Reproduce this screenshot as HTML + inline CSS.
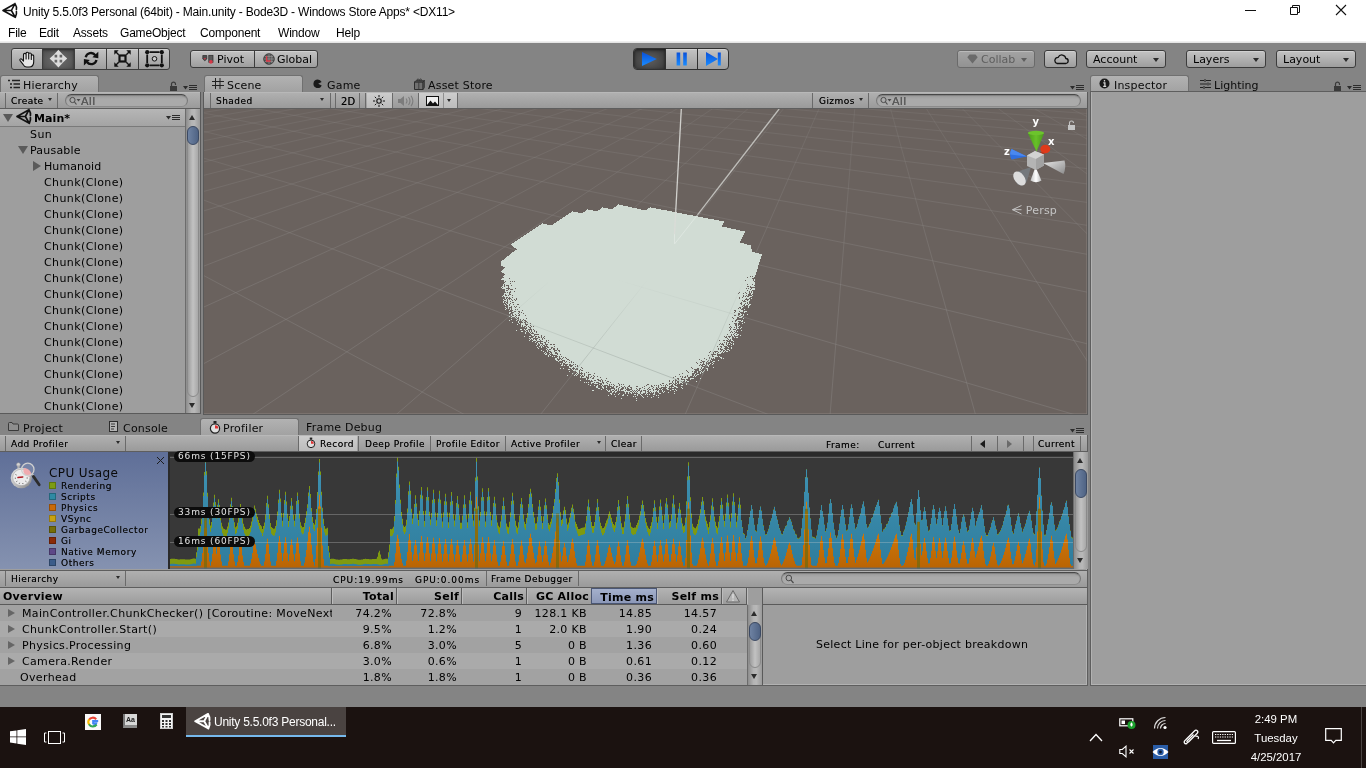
<!DOCTYPE html>
<html lang="en"><head><meta charset="utf-8"><title>Unity 5.5.0f3 Personal</title>
<style>
*{box-sizing:border-box;margin:0;padding:0}
html,body{width:1366px;height:768px;overflow:hidden}
body{background:#848484;font-family:"DejaVu Sans","Liberation Sans",sans-serif;font-size:12px;color:#000;position:relative;line-height:1}
.a{position:absolute}
.t{position:absolute;white-space:nowrap;line-height:16px;height:16px}
.win{font-family:"Liberation Sans",sans-serif}
#titlebar{left:0;top:0;width:1366px;height:43px;background:#fff}
#titlebar:after{content:"";position:absolute;left:0;right:0;bottom:0;height:2px;background:linear-gradient(#f4f4f4,#e0e0e0)}
#title{left:23px;top:4px;font-size:12px;letter-spacing:-0.19px;line-height:16px}
.menu{top:25px;font-size:12px;line-height:16px;letter-spacing:-.2px}
.btn{position:absolute;border:1px solid #3c3c3c;border-radius:3px;background:linear-gradient(#c3c3c3,#9e9e9e);box-shadow:inset 0 1px 0 rgba(255,255,255,.25)}
.tab{position:absolute;height:17px;border:1px solid #707070;border-bottom:none;border-radius:3px 3px 0 0;background:linear-gradient(#b2b2b2,#a2a2a2)}
.tabt{position:absolute;margin-top:1px;font-size:11px;line-height:16px;white-space:nowrap;color:#0a0a0a;letter-spacing:.2px}
.panel{position:absolute;background:#9e9e9e}
.tbar{position:absolute;height:17px;background:linear-gradient(#b0b0b0,#9a9a9a);border-bottom:1px solid #5e5e5e;border-top:1px solid #b8b8b8}
.tb{position:absolute;top:0;margin-top:1px;height:15px;font-size:9px;line-height:15px;white-space:nowrap;letter-spacing:.45px;color:#000;padding:0 0 0 5px;text-shadow:0 0 .4px rgba(0,0,0,.6)}
.sep{position:absolute;top:0;width:1px;height:15px;background:#6a6a6a}
.dd{position:absolute;width:0;height:0;border-left:3px solid transparent;border-right:3px solid transparent;border-top:4px solid #2a2a2a}
.search{position:absolute;height:13px;border:1px solid #787878;border-top-color:#484848;border-bottom-color:#8c8c8c;border-radius:7px;background:linear-gradient(#9c9c9c,#aaaaaa 40%);box-shadow:inset 0 1px 1px rgba(0,0,0,.18)}
.sb{position:absolute;width:15px;background:linear-gradient(90deg,#8c8c8c,#b4b4b4 40%,#b8b8b8 60%,#9a9a9a);border-left:1px solid #6c6c6c}
.thumb{position:absolute;left:1px;width:12px;border:1px solid #3c4a64;border-radius:6px;background:linear-gradient(90deg,#6e82a2,#4f6384)}
.track{position:absolute;left:1px;width:12px;border-radius:6px;background:linear-gradient(90deg,#9c9c9c,#c2c2c2 50%,#a8a8a8);border:1px solid #8a8a8a}
.hr{position:absolute;margin-top:1px;left:0;height:16px;font-size:11px;line-height:16px;white-space:nowrap;letter-spacing:.4px}
.tri-d{position:absolute;width:0;height:0;border-left:5px solid transparent;border-right:5px solid transparent;border-top:8px solid #5a5a5a}
.tri-r{position:absolute;width:0;height:0;border-top:5px solid transparent;border-bottom:5px solid transparent;border-left:8px solid #5a5a5a}
.lg{position:absolute;left:49px;width:7px;height:7px;border:1px solid rgba(0,0,0,.25)}
.lt{position:absolute;left:61px;font-size:9px;line-height:11px;letter-spacing:.55px;white-space:nowrap;color:#0a0a0a;text-shadow:0 0 .4px rgba(0,0,0,.6)}
.row{position:absolute;left:0;width:747px;height:16px}
.cell{position:absolute;top:0;margin-top:1px;height:16px;line-height:16px;font-size:11px;white-space:nowrap;letter-spacing:.35px}
.r{text-align:right}
.th{position:absolute;top:0;height:16px;line-height:18px;font-size:11px;font-weight:bold;white-space:nowrap;letter-spacing:.25px;text-align:right;border-right:1px solid #5c5c5c;box-shadow:1px 0 0 #bcbcbc;padding-right:2px}
.pill{position:absolute;left:174px;height:11px;border-radius:6px;background:#0c0c0c;color:#e4e4e4;font-size:9px;line-height:11px;padding:0 4px;letter-spacing:.85px;white-space:nowrap}
#taskbar{left:0;top:707px;width:1366px;height:61px;background:#1b1210}
.tk{position:absolute;color:#fff;font-family:"Liberation Sans",sans-serif;font-size:11.4px;white-space:nowrap}
#root{position:absolute;left:0;top:0;width:1366px;height:768px;will-change:transform}
</style></head><body><div id="root">
<!-- TITLE + MENU -->
<div id="titlebar" class="a win">
<svg class="a" style="left:0;top:0" width="20" height="22" viewBox="0 0 20 22"><path d="M3 10.500L15 3.700M3 10.500L15.300 17.300M3 10.500H11.400M11.400 10.500L15 3.700M11.400 10.500L15.300 17.300M15 3.700Q17 7 16.400 9.500M16.400 11.500Q17 14 15.300 17.300" stroke="#111" stroke-width="1.600" fill="none" stroke-linejoin="round" stroke-linecap="round"/></svg>
<div id="title" class="t">Unity 5.5.0f3 Personal (64bit) - Main.unity - Bode3D - Windows Store Apps* &lt;DX11&gt;</div>
<svg class="a" style="left:1240px;top:0" width="126" height="22" viewBox="0 0 126 22"><path d="M5 10.5h11" stroke="#111" stroke-width="1"/><path d="M50.5 7.5h7v7h-7z M52.5 7.5v-2h7v7h-2" stroke="#111" stroke-width="1" fill="none"/><path d="M96 5l10 10M106 5l-10 10" stroke="#111" stroke-width="1.1"/></svg>
<div class="t menu" style="left:8px">File</div>
<div class="t menu" style="left:39px">Edit</div>
<div class="t menu" style="left:73px">Assets</div>
<div class="t menu" style="left:120px">GameObject</div>
<div class="t menu" style="left:200px">Component</div>
<div class="t menu" style="left:278px">Window</div>
<div class="t menu" style="left:336px">Help</div>
</div>
<!-- MAIN TOOLBAR -->
<div class="btn" style="left:11px;top:48px;width:159px;height:22px;overflow:hidden">
 <div class="a" style="left:30px;top:0;width:32px;height:20px;background:radial-gradient(ellipse at 50% 55%,#6e6e6e,#545454 75%);box-shadow:inset 0 1px 3px rgba(0,0,0,.55)"></div>
 <div class="a" style="left:30px;top:0;width:1px;height:20px;background:#3c3c3c"></div>
 <div class="a" style="left:62px;top:0;width:1px;height:20px;background:#3c3c3c"></div>
 <div class="a" style="left:94px;top:0;width:1px;height:20px;background:#3c3c3c"></div>
 <div class="a" style="left:126px;top:0;width:1px;height:20px;background:#3c3c3c"></div>
 <svg class="a" style="left:0;top:0" width="158" height="20" viewBox="0 0 158 20">
  <g transform="translate(6.500,1.500)"><path d="M1.600 10.200c-1-1.300.7-2.600 1.800-1.400L5 10.600V4c0-1.500 2.600-1.500 2.600 0V8.500V2.800c0-1.500 2.600-1.500 2.600 0V8.500V3.600c0-1.500 2.600-1.500 2.600 0V9V5.400c0-1.400 2.400-1.400 2.400 0V11.500c0 3-1.800 5-4.600 5H8.200c-1.800 0-2.800-1-3.800-2.800Z" fill="#e6e6e6" stroke="#111" stroke-width="1.100" stroke-linejoin="round"/></g>
  <path d="M46.400.8L51 5.800H47.600V8.400H50.200V5L55.200 9.600L50.200 14.200V10.800H47.600V13.400H51L46.400 18.400L41.800 13.400H45.200V10.800H42.600V14.200L37.600 9.600L42.600 5V8.400H45.200V5.800H41.800Z" fill="#dcdcdc"/>
  <path d="M73.700 8.300A5.400 5.400 0 0 1 83.300 6.200" stroke="#111" stroke-width="2.300" fill="none"/><path d="M86.300 2.800V9.200L80.400 8.200Z" fill="#111"/>
  <path d="M84.500 10.900A5.400 5.400 0 0 1 74.900 13" stroke="#111" stroke-width="2.300" fill="none"/><path d="M71.900 16.400V10L77.800 11Z" fill="#111"/>
  <rect x="107.500" y="6.500" width="6" height="6" fill="none" stroke="#111" stroke-width="2.200"/>
  <path d="M103.500 2.500l3.200 3.200M117.500 2.500l-3.200 3.200M103.500 16.500l3.200-3.200M117.500 16.500l-3.200-3.200" stroke="#111" stroke-width="1.400"/>
  <path d="M102.300 1.300h4.400l-4.400 4.400zM118.700 1.300h-4.400l4.400 4.400zM102.300 17.700h4.400l-4.400-4.400zM118.700 17.700h-4.400l4.400-4.400z" fill="#111"/>
  <path d="M137.500 3.200h10M137.500 16.300h10M135.200 5.500v8.500M149.800 5.500v8.500" stroke="#111" stroke-width="1.800"/>
  <circle cx="135.200" cy="3.200" r="2.100" fill="#111"/><circle cx="149.800" cy="3.200" r="2.100" fill="#111"/><circle cx="135.200" cy="16.300" r="2.100" fill="#111"/><circle cx="149.800" cy="16.300" r="2.100" fill="#111"/>
  <circle cx="142.500" cy="9.800" r="2.300" fill="#c8c8c8" stroke="#111" stroke-width="1"/>
 </svg>
</div>
<div class="btn" style="left:190px;top:50px;width:128px;height:18px">
 <div class="a" style="left:63px;top:0;width:1px;height:16px;background:#3c3c3c"></div>
 <svg class="a" style="left:11px;top:3px" width="12" height="11" viewBox="0 0 12 11"><path d="M.8 1.500h4v3.500l-2 1.800l-2-1.800z" fill="#4e4e4e" stroke="#2a2a2a" stroke-width=".7"/><path d="M1.300 4.200h3l-1.500 1.600z" fill="#d83848"/><rect x="6.800" y="1.300" width="4.200" height="7" fill="#5a5a5a" stroke="#2a2a2a" stroke-width=".7"/><circle cx="8.900" cy="7.800" r="1.900" fill="#d83848"/></svg>
 <div class="t" style="left:26px;top:1px;font-size:11px;letter-spacing:0">Pivot</div>
 <svg class="a" style="left:72px;top:2px" width="12" height="12" viewBox="0 0 12 12"><circle cx="6" cy="6" r="5.300" fill="#585858" stroke="#2e2e2e" stroke-width=".8"/><path d="M6 1v10M8.800 1.800v8.400M1 6h10M1.800 3.500h8.400M1.800 8.500h8.400" stroke="#9a9a9a" stroke-width=".6"/><path d="M3.600 3.300v4.700h4" stroke="#e03848" stroke-width="1.300" fill="none"/></svg>
 <div class="t" style="left:86px;top:1px;font-size:11px;letter-spacing:0">Global</div>
</div>
<!-- play controls -->
<div class="btn" style="left:633px;top:48px;width:96px;height:22px;overflow:hidden;border-color:#303030;border-radius:4px">
 <div class="a" style="left:0;top:0;width:31px;height:20px;background:radial-gradient(ellipse at 50% 55%,#5e5e5e,#3e3e3e 80%);box-shadow:inset 0 1px 3px rgba(0,0,0,.6)"></div>
 <div class="a" style="left:31px;top:0;width:1px;height:20px;background:#303030"></div>
 <div class="a" style="left:63px;top:0;width:1px;height:20px;background:#303030"></div>
 <svg class="a" style="left:0;top:0" width="94" height="20" viewBox="0 0 94 20"><defs><linearGradient id="pb" x1="0" y1="0" x2="0" y2="1"><stop offset="0" stop-color="#0a50d8"/><stop offset="1" stop-color="#1a8cff"/></linearGradient></defs>
  <path d="M8 3v14l14.800-7z" fill="url(#pb)"/>
  <rect x="42.600" y="3.500" width="3.600" height="13" fill="url(#pb)"/><rect x="49.200" y="3.500" width="3.600" height="13" fill="url(#pb)"/>
  <path d="M72 3v14l12-7z" fill="url(#pb)"/><rect x="83.800" y="3.500" width="3" height="13" fill="url(#pb)"/>
 </svg>
</div>
<!-- right toolbar -->
<div class="btn" style="left:957px;top:50px;width:78px;height:18px;border-color:#6a6a6a;background:linear-gradient(#a4a4a4,#929292)">
 <svg class="a" style="left:9px;top:3px" width="11" height="10" viewBox="0 0 11 10"><path d="M2.500 .5h6l2.200 2.800L5.500 9.500.3 3.300z" fill="#6a6a6a"/></svg>
 <div class="t" style="left:23px;top:1px;font-size:11px;letter-spacing:0;color:#5e5e5e">Collab</div>
 <div class="dd" style="left:63px;top:7px;border-top-color:#5e5e5e"></div>
</div>
<div class="btn" style="left:1044px;top:50px;width:33px;height:18px">
 <svg class="a" style="left:8px;top:3px" width="16" height="11" viewBox="0 0 16 11"><path d="M4 9.500h8.500a2.500 2.500 0 0 0 .3-5A4 4 0 0 0 5.200 3.300 3.200 3.200 0 0 0 4 9.500z" fill="none" stroke="#111" stroke-width="1.300"/></svg>
</div>
<div class="btn" style="left:1086px;top:50px;width:80px;height:18px"><div class="t" style="left:6px;top:1px;font-size:11px;letter-spacing:0">Account</div><div class="dd" style="left:66px;top:7px"></div></div>
<div class="btn" style="left:1186px;top:50px;width:80px;height:18px"><div class="t" style="left:6px;top:1px;font-size:11px;letter-spacing:0">Layers</div><div class="dd" style="left:66px;top:7px"></div></div>
<div class="btn" style="left:1276px;top:50px;width:80px;height:18px"><div class="t" style="left:6px;top:1px;font-size:11px;letter-spacing:0">Layout</div><div class="dd" style="left:66px;top:7px"></div></div>
<!-- HIERARCHY -->
<div class="tab" style="left:0;top:75px;width:99px"></div>
<svg class="a" style="left:8px;top:79px" width="12" height="10" viewBox="0 0 12 10"><path d="M0 1.500h2M4 1.500h8M2 5h2M5.500 5H12M2 8.500h2M5.500 8.500H12" stroke="#222" stroke-width="1.300"/></svg>
<div class="tabt" style="left:23px;top:77px">Hierarchy</div>
<svg class="a" style="left:169px;top:80.700px" width="10" height="11" viewBox="0 0 10 11"><rect x="1" y="5" width="7" height="5" fill="#3a3a3a"/><path d="M2.500 5V3.200a2 2 0 0 1 4 0V4" stroke="#3a3a3a" stroke-width="1.200" fill="none"/></svg>
<svg class="a" style="left:183px;top:85px" width="15" height="7" viewBox="0 0 15 7"><path d="M0 1h5L2.500 4.500z" fill="#2c2c2c"/><path d="M6 .5h8M6 2.500h8M6 4.500h8" stroke="#2c2c2c" stroke-width="1"/></svg>
<div class="panel" style="left:0;top:92px;width:200px;height:322px"></div>
<div class="tbar" style="left:0;top:92px;width:200px">
 <div class="sep" style="left:5px"></div>
 <div class="tb" style="left:6px">Create</div><div class="dd" style="left:48px;top:5px;border-left-width:2.500px;border-right-width:2.500px;border-top-width:3px"></div>
 <div class="sep" style="left:57px"></div>
 <div class="search" style="left:65px;top:1px;width:123px"></div>
 <svg class="a" style="left:69px;top:3px" width="12" height="10" viewBox="0 0 12 10"><circle cx="3.500" cy="4" r="2.600" fill="none" stroke="#4a4a4a" stroke-width="1"/><path d="M5.500 6l2 2.500" stroke="#4a4a4a" stroke-width="1.200"/><path d="M7.500 3h4l-2 2.500z" fill="#4a4a4a"/></svg>
 <div class="tb" style="left:76px;color:#5c5c5c;font-size:11px;letter-spacing:.3px">All</div>
</div>
<div class="a" style="left:0;top:109px;width:185px;height:18px;background:linear-gradient(#b6b6b6,#a4a4a4);border-bottom:1px solid #7a7a7a"></div>
<div class="tri-d" style="left:3px;top:114px"></div>
<svg class="a" style="left:14px;top:106px" width="20" height="22" viewBox="0 0 20 22"><path d="M3 10.500L15 3.700M3 10.500L15.300 17.300M3 10.500H11.400M11.400 10.500L15 3.700M11.400 10.500L15.300 17.300M15 3.700Q17 7 16.400 9.500M16.400 11.500Q17 14 15.300 17.300" stroke="#111" stroke-width="1.700" fill="none" stroke-linejoin="round" stroke-linecap="round"/></svg>
<div class="hr" style="left:34px;top:110px;font-weight:bold;letter-spacing:.1px">Main*</div>
<svg class="a" style="left:166px;top:115px" width="15" height="7" viewBox="0 0 15 7"><path d="M0 1h5L2.500 4.500z" fill="#2c2c2c"/><path d="M6 .5h8M6 2.500h8M6 4.500h8" stroke="#2c2c2c" stroke-width="1"/></svg>
<div class="hr" style="left:30px;top:126px">Sun</div>
<div class="tri-d" style="left:18px;top:146px"></div><div class="hr" style="left:30px;top:142px;letter-spacing:.2px">Pausable</div>
<div class="tri-r" style="left:33px;top:161px"></div><div class="hr" style="left:44px;top:158px;letter-spacing:.1px">Humanoid</div>
<div class="hr" style="left:44px;top:174px">Chunk(Clone)</div>
<div class="hr" style="left:44px;top:190px">Chunk(Clone)</div>
<div class="hr" style="left:44px;top:206px">Chunk(Clone)</div>
<div class="hr" style="left:44px;top:222px">Chunk(Clone)</div>
<div class="hr" style="left:44px;top:238px">Chunk(Clone)</div>
<div class="hr" style="left:44px;top:254px">Chunk(Clone)</div>
<div class="hr" style="left:44px;top:270px">Chunk(Clone)</div>
<div class="hr" style="left:44px;top:286px">Chunk(Clone)</div>
<div class="hr" style="left:44px;top:302px">Chunk(Clone)</div>
<div class="hr" style="left:44px;top:318px">Chunk(Clone)</div>
<div class="hr" style="left:44px;top:334px">Chunk(Clone)</div>
<div class="hr" style="left:44px;top:350px">Chunk(Clone)</div>
<div class="hr" style="left:44px;top:366px">Chunk(Clone)</div>
<div class="hr" style="left:44px;top:382px">Chunk(Clone)</div>
<div class="hr" style="left:44px;top:398px">Chunk(Clone)</div>
<div class="sb" style="left:185px;top:109px;height:305px">
 <div class="track" style="top:17px;height:271px"></div>
 <div class="thumb" style="top:17px;height:19px"></div>
 <div class="a" style="left:3px;top:6px;width:0;height:0;border-left:3.500px solid transparent;border-right:3.500px solid transparent;border-bottom:5px solid #2c2c2c"></div>
 <div class="a" style="left:3px;top:294px;width:0;height:0;border-left:3.500px solid transparent;border-right:3.500px solid transparent;border-top:5px solid #2c2c2c"></div>
</div>
<div class="a" style="left:200px;top:92px;width:1px;height:322px;background:#5a5a5a"></div>
<div class="a" style="left:0;top:413px;width:201px;height:1px;background:#5a5a5a"></div>
<!-- SCENE -->
<div class="tab" style="left:204px;top:75px;width:99px"></div>
<svg class="a" style="left:212px;top:78px" width="12" height="11" viewBox="0 0 12 11"><path d="M3.500 0v11M8 0v11M0 3.500h12M0 7.500h12" stroke="#222" stroke-width="1"/></svg>
<div class="tabt" style="left:227px;top:77px">Scene</div>
<svg class="a" style="left:313px;top:78.500px" width="9.500" height="9.500" viewBox="0 0 11 11"><path d="M5.500 .5a5 5 0 1 0 4.600 7L6 5.500l4-2A5 5 0 0 0 5.500 .5z" fill="#1a1a1a"/></svg>
<div class="tabt" style="left:327px;top:77px">Game</div>
<svg class="a" style="left:413px;top:78px" width="12" height="12" viewBox="0 0 12 12"><path d="M1.500 4h8.500v7.500h-8.500z" fill="#707070" stroke="#2e2e2e" stroke-width="1"/><path d="M1.500 4l1.500-1.500h8.500l-1.500 1.500zM10 4l1.500-1.500v7l-1.500 2z" fill="#4a4a4a" stroke="#2e2e2e" stroke-width=".6"/><path d="M4.500 2.500C3.500 .5 6 .3 6.300 2.500 6.800 .3 9.300 .8 8 2.500" fill="none" stroke="#2e2e2e" stroke-width=".9"/><path d="M5.800 4v7.500" stroke="#3a3a3a" stroke-width=".9"/></svg>
<div class="tabt" style="left:428px;top:77px">Asset Store</div>
<svg class="a" style="left:1070px;top:85px" width="15" height="7" viewBox="0 0 15 7"><path d="M0 1h5L2.500 4.500z" fill="#2c2c2c"/><path d="M6 .5h8M6 2.500h8M6 4.500h8" stroke="#2c2c2c" stroke-width="1"/></svg>
<div class="a" style="left:203px;top:92px;width:885px;height:323px;background:#8a827e;border:1px solid #5a5a5a;border-top:none"></div>
<div class="tbar" style="left:204px;top:92px;width:2px"></div>
<div class="tbar" style="left:205px;top:92px;width:882px">
 <div class="sep" style="left:5px"></div>
 <div class="tb" style="left:6px">Shaded</div><div class="dd" style="left:115px;top:5px;border-left-width:2.500px;border-right-width:2.500px;border-top-width:3px"></div>
 <div class="sep" style="left:125px"></div><div class="sep" style="left:130px"></div>
 <div class="tb" style="left:131px;font-size:10px;letter-spacing:.2px">2D</div>
 <div class="sep" style="left:154px"></div><div class="sep" style="left:160px"></div>
 <div class="a" style="left:162px;top:0;width:25px;height:15px;background:linear-gradient(#cdcdcd,#bcbcbc)"></div>
 <svg class="a" style="left:167px;top:1px" width="14" height="14" viewBox="0 0 14 14"><circle cx="7" cy="7" r="2.200" fill="none" stroke="#111" stroke-width="1.100"/><path d="M7 1v2.200M7 10.800V13M1 7h2.200M10.800 7H13M2.800 2.800l1.500 1.500M9.700 9.700l1.500 1.500M2.800 11.200l1.500-1.500M9.700 4.300l1.500-1.500" stroke="#111" stroke-width="1"/></svg>
 <div class="sep" style="left:187px"></div>
 <svg class="a" style="left:192px;top:2px" width="18" height="12" viewBox="0 0 18 12"><path d="M1 4h2.500L7 1v10L3.500 8H1z" fill="#7c7c7c"/><path d="M9 3.500q2 2.500 0 5M11.500 2q3 4 0 8M14 .8q3.800 5.200 0 10.400" stroke="#7c7c7c" fill="none" stroke-width="1.100"/></svg>
 <div class="sep" style="left:213px"></div>
 <div class="a" style="left:214px;top:0;width:38px;height:15px;background:linear-gradient(#cdcdcd,#bcbcbc)"></div>
 <svg class="a" style="left:221px;top:3px" width="13" height="10" viewBox="0 0 13 10"><rect x=".5" y=".5" width="12" height="9" fill="#f0f0f0" stroke="#111"/><path d="M1 9l3.500-4.500 2.500 3 2-2L12 9z" fill="#111"/></svg>
 <div class="sep" style="left:238px;background:#909090"></div>
 <div class="dd" style="left:242px;top:6px;border-left-width:2.500px;border-right-width:2.500px;border-top-width:3px"></div>
 <div class="sep" style="left:252px"></div>
 <div class="sep" style="left:607px"></div>
 <div class="tb" style="left:609px">Gizmos</div><div class="dd" style="left:654px;top:5px;border-left-width:2.500px;border-right-width:2.500px;border-top-width:3px"></div>
 <div class="sep" style="left:663px"></div>
 <div class="search" style="left:671px;top:1px;width:205px"></div>
 <svg class="a" style="left:675px;top:3px" width="12" height="10" viewBox="0 0 12 10"><circle cx="3.500" cy="4" r="2.600" fill="none" stroke="#4a4a4a" stroke-width="1"/><path d="M5.500 6l2 2.500" stroke="#4a4a4a" stroke-width="1.200"/><path d="M7.500 3h4l-2 2.500z" fill="#4a4a4a"/></svg>
 <div class="tb" style="left:682px;color:#5c5c5c;font-size:11px;letter-spacing:.3px">All</div>
</div>
<svg class="a" style="left:204px;top:109px" width="882.500" height="304.500" viewBox="0 0 882.500 304.500">
<rect width="882.500" height="304.500" fill="#6a625e"/>
<defs><linearGradient id="gf" x1="0" y1="0" x2="0" y2="1"><stop offset="0" stop-color="#8a8684" stop-opacity=".16"/><stop offset=".35" stop-color="#8a8684" stop-opacity=".42"/><stop offset="1" stop-color="#8a8684" stop-opacity=".5"/></linearGradient></defs>
<path d="M-292.9 437.7L-211.1 656.4M-299 76.4L384.8 685.5M-298.6 7.5L941.2 668.5M-299.6 -22.6L1269.9 573.4M-294.8 -37.6L1278.2 425.7M-259.8 -39.9L1283.6 331M-227.3 -42L1287.3 265.1M-197 -44L1290 216.6M-168.7 -45.8L1292.2 179.4M-142.3 -47.6L1293.8 149.9M-117.4 -49.2L1295.2 126M-94.1 -50.7L1296.3 106.3M-72.1 -52.2L1297.2 89.7M-51.4 -53.5L1298 75.5M-31.8 -54.8L1298.7 63.3M-13.2 -56L1299.3 52.7M4.3 -57.2L1299.8 43.3M21 -58.3L1281.3 33.6M36.9 -59.3L1282.8 26.4M51.9 -60.3L1284 19.8M66.3 -61.2L1285.2 13.9M80 -62.1L1286.3 8.6M93.1 -63L1287.2 3.7M105.6 -63.8L1288.1 -0.8M117.5 -64.6L1288.9 -4.9M129 -65.4L1289.6 -8.7M140 -66.1L1290.3 -12.2M150.5 -66.8L1291 -15.4M160.6 -67.4L1291.6 -18.5M170.3 -68.1L1292.1 -21.3M179.7 -68.7L1292.6 -23.9M188.7 -69.3L1293.1 -26.4M197.4 -69.8L1293.6 -28.7M205.7 -70.4L1294 -30.9M213.8 -70.9L1294.4 -33M221.5 -71.4L1294.8 -34.9M229 -71.9L1295.2 -36.8M236.3 -72.4L1295.5 -38.5M243.3 -72.9L1295.8 -40.2M250.1 -73.3L1296.1 -41.7M256.7 -73.7L1296.4 -43.2M263 -74.1L1296.7 -44.6M269.2 -74.5L1297 -46M275.1 -74.9L1297.2 -47.3M280.9 -75.3L1297.5 -48.5M286.6 -75.7L1297.7 -49.7M292 -76L1297.9 -50.8M297.3 -76.4L1298.1 -51.9M302.4 -76.7L1298.3 -53M307.4 -77.1L1298.5 -54M312.3 -77.4L1298.7 -54.9M317 -77.7L1298.9 -55.8M321.6 -78L1299.1 -56.7M326.1 -78.3L1299.3 -57.6M330.5 -78.6L1299.4 -58.4M334.7 -78.8L1299.6 -59.2M338.9 -79.1L1299.7 -60M342.9 -79.4L1299.9 -60.7M346.8 -79.6L1294.3 -61.5M350.7 -79.9L1294.5 -62.2M354.4 -80.1L1294.7 -62.9M358.1 -80.4L1295 -63.5M-294.8 -37.6L361.7 -80.6M-291.1 -36.5L366.6 -80.5M-296.8 -34.7L371.5 -80.4M-292.9 -33.5L376.5 -80.3M-298.9 -31.6L381.6 -80.3M-294.9 -30.2L386.7 -80.2M-290.8 -28.9L391.9 -80.1M-297.1 -26.6L397.2 -80M-292.8 -25.1L402.5 -79.9M-299.6 -22.6L407.9 -79.8M-295 -20.8L413.3 -79.7M-290.3 -19L418.9 -79.6M-297.6 -16.1L424.4 -79.5M-292.6 -14L430.1 -79.4M-287.3 -11.9L435.8 -79.3M-295.2 -8.3L441.6 -79.2M-289.7 -5.8L447.5 -79.1M-298.2 -1.8L453.4 -79M-292.3 1.1L459.4 -78.9M-286.1 4.1L465.5 -78.8M-295.4 9.2L471.7 -78.7M-288.8 12.8L477.9 -78.6M-299.1 18.7L484.3 -78.4M-291.9 23L490.7 -78.3M-284.2 27.6L497.2 -78.2M-295.8 35.4L503.8 -78.1M-287.4 41L510.5 -78M-278.2 47.1L517.2 -77.9M-291.3 57.6L524.1 -77.7M-281.2 65.3L531 -77.6M-296.4 78.7L538.1 -77.5M-285.1 88.8L545.2 -77.4M-272.4 100.1L552.5 -77.2M-290.2 120.3L559.8 -77.1M-275.6 135.9L567.3 -77M-297.5 164.7L574.8 -76.8M-280.3 187.7L582.5 -76.7M-259.7 215.2L590.3 -76.6M-287.6 269.3L598.2 -76.4M-261.3 316.2L606.2 -76.3M-227.3 376.8L614.3 -76.1M-264.5 513.6L622.5 -76M-211.1 656.4L630.9 -75.9M64.1 648.4L639.4 -75.7M334.4 640.6L648 -75.6M599.7 632.9L656.8 -75.4M860.3 625.3L665.7 -75.2M1116.2 617.9L674.7 -75.1M1294.3 537L683.9 -74.9M1266.9 347.4L693.2 -74.8M1287.3 265.1L702.7 -74.6M1270.6 193.4L712.3 -74.4M1284.5 155.4L722.1 -74.2M1295.2 126L732 -74.1M1283 96.2L742.1 -73.9M1291.5 78.3L752.4 -73.7M1298.7 63.3L762.8 -73.5M1289.2 47L773.4 -73.3M1295.4 36.6L784.2 -73.1M1287.5 25L795.2 -73M1292.9 17.3L806.4 -72.8M1297.7 10.6L817.8 -72.6M1291.1 2.7L829.3 -72.3M1295.4 -2.5L841.1 -72.1M1299.4 -7.3L853.1 -71.9M1293.6 -12.9L865.3 -71.7M1297.2 -16.7L877.8 -71.5M1292.1 -21.3L890.4 -71.3M1295.5 -24.5L903.3 -71M1298.6 -27.4L916.5 -70.8M1294 -30.9L929.9 -70.6M1296.9 -33.4L943.5 -70.3M1299.6 -35.7L957.4 -70.1M1295.5 -38.5L971.6 -69.8M1298.1 -40.5L986.1 -69.6M1294.3 -42.9L1000.8 -69.3M1296.7 -44.6L1015.9 -69.1M1299 -46.3L1031.2 -68.8M1295.5 -48.3L1046.9 -68.5M1297.7 -49.7L1062.9 -68.2M1299.8 -51.1L1079.2 -67.9M1296.6 -52.7L1095.9 -67.6M1298.5 -54L1113 -67.3M1295.5 -55.5L1130.4 -67M1297.4 -56.5L1148.2 -66.7M1299.3 -57.6L1166.4 -66.4M1296.5 -58.9L1185 -66.1M1298.2 -59.8L1204 -65.7M1299.9 -60.7L1223.4 -65.4M1297.2 -61.8L1243.3 -65M1298.9 -62.6L1263.7 -64.7M1296.4 -63.6L1284.6 -64.3" stroke="url(#gf)" stroke-width="1" fill="none"/>
<path d="M414 95h1M413 96h6M412 97h12M398 98h1M410 98h18M446 98h1M397 99h7M409 99h24M444 99h8M383 100h1M396 100h41M443 100h14M382 101h7M394 101h69M368 102h1M381 102h87M367 103h7M379 103h94M365 104h113M364 105h119M362 106h127M361 107h133M359 108h140M358 109h146M356 110h154M355 111h160M353 112h167M352 113h168M338 114h1M350 114h169M337 115h6M349 115h170M335 116h183M334 117h184M332 118h191M331 119h196M329 120h203M328 121h208M326 122h215M325 123h216M323 124h217M322 125h218M320 126h219M319 127h220M317 128h221M316 129h222M314 130h223M313 131h224M311 132h225M310 133h226M308 134h232M307 135h236M308 136h239M309 137h238M310 138h237M312 139h235M313 140h235M311 141h237M310 142h238M308 143h243M307 144h248M306 145h252M305 146h253M303 147h254M302 148h255M301 149h256M300 150h256M298 151h258M297 152h259M297 153h258M297 154h258M297 155h258M297 156h257M299 157h255M301 158h253M300 159h254M299 160h254M298 161h255M297 162h256M298 163h254M300 164h252M301 165h251M300 166h251M299 167h247M547 167h1M549 167h2M300 168h243M544 168h6M298 169h7M306 169h242M297 170h252M550 170h1M300 171h241M542 171h7M550 171h1M300 172h1M302 172h4M307 172h1M309 172h1M311 172h239M301 173h250M300 174h6M307 174h244M299 175h1M301 175h242M544 175h4M549 175h2M299 176h1M301 176h1M305 176h2M308 176h242M298 177h2M301 177h3M305 177h238M545 177h1M547 177h4M297 178h1M299 178h5M305 178h241M298 179h4M306 179h5M312 179h230M543 179h1M545 179h2M548 179h3M301 180h3M305 180h1M309 180h237M547 180h4M301 181h1M304 181h239M544 181h4M301 182h5M307 182h3M311 182h234M546 182h1M548 182h1M302 183h1M304 183h1M307 183h228M536 183h5M542 183h3M546 183h1M548 183h1M300 184h5M306 184h228M535 184h4M540 184h2M543 184h2M547 184h2M300 185h1M302 185h3M307 185h237M547 185h1M299 186h2M303 186h1M305 186h3M309 186h230M540 186h2M543 186h1M548 186h1M298 187h1M300 187h239M540 187h1M542 187h1M545 187h3M301 188h1M304 188h1M306 188h2M309 188h226M536 188h2M539 188h7M301 189h1M303 189h1M307 189h5M313 189h222M536 189h6M543 189h2M547 189h1M299 190h1M302 190h1M304 190h1M306 190h1M308 190h2M311 190h1M313 190h228M545 190h1M300 191h3M304 191h4M309 191h2M312 191h226M539 191h1M541 191h2M544 191h2M299 192h1M302 192h1M304 192h2M307 192h232M542 192h3M299 193h1M301 193h1M304 193h4M310 193h227M538 193h5M544 193h1M302 194h1M304 194h2M307 194h229M538 194h3M542 194h1M544 194h1M300 195h1M303 195h2M306 195h3M310 195h3M315 195h222M538 195h2M541 195h3M545 195h2M301 196h1M304 196h1M306 196h233M541 196h1M544 196h2M304 197h3M308 197h2M311 197h1M313 197h225M539 197h1M544 197h1M301 198h1M304 198h1M308 198h3M312 198h3M316 198h219M537 198h2M544 198h1M302 199h1M304 199h1M306 199h1M308 199h226M535 199h1M537 199h1M301 200h1M306 200h1M308 200h3M312 200h1M314 200h223M540 200h1M305 201h1M309 201h9M319 201h211M532 201h7M308 202h2M312 202h2M316 202h215M532 202h3M536 202h3M540 202h3M305 203h2M310 203h5M316 203h1M318 203h212M531 203h5M540 203h1M305 204h1M309 204h5M315 204h4M320 204h214M536 204h1M307 205h1M309 205h2M312 205h3M316 205h218M536 205h2M539 205h1M543 205h1M307 206h1M310 206h2M313 206h1M316 206h5M322 206h208M532 206h2M535 206h2M539 206h1M305 207h1M308 207h3M312 207h223M537 207h2M307 208h1M311 208h1M313 208h1M315 208h213M529 208h4M535 208h3M312 209h1M315 209h7M323 209h206M530 209h3M539 209h1M307 210h1M313 210h1M315 210h1M317 210h2M320 210h212M305 211h1M312 211h1M315 211h1M317 211h1M319 211h1M322 211h209M533 211h4M538 211h1M314 212h1M318 212h3M323 212h205M529 212h2M532 212h2M537 212h2M308 213h1M314 213h1M319 213h1M322 213h1M324 213h211M540 213h1M315 214h1M317 214h4M322 214h4M327 214h203M533 214h1M538 214h1M313 215h1M317 215h4M324 215h201M526 215h5M533 215h1M317 216h1M319 216h3M323 216h3M327 216h204M533 216h1M535 216h1M317 217h1M319 217h1M322 217h2M325 217h2M328 217h1M330 217h196M527 217h5M533 217h2M321 218h1M323 218h2M327 218h198M526 218h1M528 218h2M531 218h1M533 218h1M537 218h1M323 219h3M327 219h199M527 219h5M533 219h2M536 219h1M316 220h2M320 220h1M322 220h2M328 220h1M330 220h196M527 220h2M532 220h1M312 221h1M321 221h1M324 221h1M326 221h1M328 221h2M331 221h194M526 221h6M537 221h1M317 222h2M322 222h1M324 222h1M326 222h1M328 222h2M331 222h1M333 222h194M528 222h2M531 222h1M533 222h1M321 223h1M325 223h1M327 223h1M329 223h3M333 223h193M527 223h1M529 223h2M321 224h1M326 224h1M330 224h200M531 224h2M327 225h3M335 225h188M524 225h3M528 225h1M530 225h2M533 225h2M328 226h2M331 226h6M338 226h189M528 226h2M531 226h3M536 226h1M320 227h1M325 227h2M330 227h1M333 227h1M335 227h2M338 227h2M341 227h179M521 227h1M523 227h1M527 227h1M529 227h1M329 228h2M332 228h2M336 228h1M338 228h1M340 228h181M523 228h2M526 228h2M530 228h1M532 228h2M325 229h1M327 229h2M334 229h4M339 229h1M341 229h182M524 229h4M326 230h1M328 230h1M330 230h1M333 230h2M336 230h2M339 230h185M525 230h1M527 230h1M325 231h1M329 231h3M333 231h3M337 231h5M343 231h1M345 231h170M516 231h3M521 231h1M524 231h1M527 231h2M328 232h1M332 232h1M339 232h3M343 232h180M529 232h1M331 233h1M334 233h2M337 233h3M342 233h2M345 233h175M521 233h1M523 233h2M526 233h1M333 234h1M335 234h1M339 234h2M342 234h174M517 234h1M519 234h3M523 234h1M527 234h1M529 234h1M333 235h1M336 235h2M339 235h2M344 235h2M348 235h1M351 235h164M516 235h1M520 235h2M523 235h1M525 235h1M529 235h1M332 236h1M336 236h1M338 236h1M341 236h1M343 236h176M520 236h3M527 236h1M335 237h1M337 237h1M339 237h1M344 237h6M351 237h162M514 237h2M518 237h2M523 237h1M333 238h1M337 238h1M342 238h1M345 238h2M349 238h168M518 238h3M524 238h1M527 238h1M334 239h1M343 239h4M348 239h1M351 239h2M354 239h160M515 239h1M517 239h3M527 239h1M342 240h1M344 240h1M347 240h2M351 240h2M354 240h160M515 240h1M519 240h2M523 240h2M337 241h1M343 241h1M345 241h5M353 241h1M356 241h161M518 241h1M521 241h1M525 241h1M339 242h1M343 242h1M347 242h3M351 242h4M356 242h150M507 242h3M514 242h2M517 242h2M520 242h1M522 242h2M341 243h1M345 243h1M348 243h3M353 243h152M506 243h3M510 243h1M512 243h2M515 243h3M519 243h1M340 244h1M342 244h1M346 244h1M348 244h3M354 244h155M510 244h3M514 244h3M341 245h2M345 245h1M349 245h4M354 245h2M357 245h150M512 245h1M344 246h1M346 246h1M353 246h151M505 246h3M509 246h4M344 247h1M348 247h1M350 247h1M354 247h1M356 247h1M358 247h150M510 247h4M515 247h1M353 248h2M356 248h3M360 248h1M362 248h143M506 248h5M516 248h2M351 249h2M354 249h1M357 249h1M359 249h3M363 249h137M501 249h4M506 249h1M508 249h1M510 249h1M517 249h1M519 249h1M351 250h2M356 250h1M358 250h5M365 250h130M496 250h6M503 250h4M352 251h2M355 251h3M361 251h4M366 251h131M498 251h6M505 251h1M507 251h1M514 251h1M354 252h1M359 252h1M361 252h1M363 252h4M368 252h130M501 252h2M504 252h2M509 252h2M359 253h2M362 253h3M366 253h1M368 253h1M370 253h122M493 253h3M498 253h1M500 253h2M503 253h1M508 253h1M356 254h1M358 254h1M361 254h132M494 254h5M500 254h2M506 254h1M509 254h1M358 255h1M364 255h1M367 255h2M370 255h1M372 255h124M497 255h1M501 255h1M503 255h1M505 255h1M508 255h1M357 256h2M360 256h1M363 256h2M369 256h4M374 256h121M496 256h1M499 256h2M503 256h2M365 257h1M368 257h3M372 257h1M374 257h124M504 257h1M365 258h4M370 258h7M378 258h109M488 258h9M498 258h2M509 258h1M356 259h1M359 259h1M367 259h1M371 259h1M374 259h4M379 259h109M489 259h4M495 259h2M498 259h1M502 259h2M364 260h2M368 260h1M370 260h1M374 260h2M377 260h113M495 260h1M497 260h1M503 260h1M369 261h6M376 261h1M379 261h103M483 261h8M495 261h2M500 261h1M503 261h1M365 262h1M372 262h3M376 262h107M484 262h4M489 262h1M493 262h1M497 262h1M499 262h1M373 263h2M376 263h1M378 263h4M383 263h1M385 263h99M485 263h5M493 263h1M496 263h1M498 263h1M368 264h1M372 264h1M374 264h1M379 264h1M381 264h9M391 264h87M479 264h9M491 264h1M496 264h1M371 265h1M373 265h1M376 265h1M378 265h2M381 265h3M387 265h88M476 265h12M490 265h1M493 265h2M363 266h1M370 266h1M372 266h1M377 266h1M379 266h1M381 266h3M385 266h4M390 266h93M484 266h4M490 266h1M492 266h1M376 267h1M380 267h2M383 267h1M385 267h2M388 267h2M391 267h2M394 267h77M472 267h4M477 267h1M479 267h2M482 267h1M484 267h2M489 267h1M491 267h1M376 268h1M378 268h4M385 268h1M387 268h2M390 268h6M397 268h72M470 268h8M479 268h1M482 268h2M382 269h1M385 269h3M390 269h12M403 269h70M475 269h2M478 269h6M486 269h4M496 269h1M382 270h1M384 270h9M395 270h2M398 270h73M472 270h2M475 270h2M481 270h1M486 270h1M376 271h1M386 271h1M388 271h2M392 271h2M397 271h1M399 271h2M402 271h63M466 271h3M470 271h1M473 271h7M481 271h2M389 272h7M397 272h1M399 272h4M405 272h60M466 272h2M469 272h2M472 272h1M475 272h2M478 272h1M481 272h1M483 272h2M492 272h1M380 273h1M382 273h1M384 273h1M387 273h3M391 273h1M395 273h3M400 273h2M403 273h3M407 273h61M469 273h2M472 273h1M475 273h3M387 274h1M390 274h4M398 274h1M400 274h3M404 274h10M415 274h43M460 274h5M468 274h1M470 274h1M473 274h1M475 274h1M478 274h1M482 274h1M384 275h1M395 275h1M398 275h7M406 275h1M408 275h1M410 275h5M416 275h1M418 275h1M420 275h23M445 275h11M457 275h5M463 275h2M466 275h2M469 275h1M472 275h1M482 275h1M386 276h1M390 276h1M393 276h1M397 276h1M399 276h1M404 276h1M406 276h4M411 276h4M416 276h9M426 276h16M443 276h4M448 276h2M451 276h1M453 276h1M455 276h2M458 276h1M460 276h1M462 276h1M464 276h3M469 276h2M477 276h2M392 277h2M398 277h1M402 277h1M408 277h1M410 277h2M414 277h3M418 277h2M421 277h3M426 277h6M434 277h6M441 277h6M449 277h5M455 277h6M462 277h3M470 277h3M392 278h2M398 278h2M402 278h1M406 278h1M410 278h2M413 278h2M416 278h2M420 278h1M422 278h1M424 278h2M428 278h10M439 278h6M446 278h3M450 278h2M453 278h1M455 278h2M463 278h2M466 278h1M468 278h2M472 278h2M477 278h1M394 279h2M399 279h1M411 279h3M415 279h2M420 279h1M422 279h1M425 279h2M428 279h4M433 279h2M437 279h3M441 279h3M445 279h3M449 279h3M454 279h1M458 279h1M462 279h2M478 279h1M397 280h1M402 280h1M407 280h3M411 280h1M413 280h1M415 280h1M419 280h3M428 280h5M434 280h1M436 280h7M444 280h1M447 280h2M450 280h1M455 280h1M457 280h1M463 280h2M468 280h2M471 280h1M388 281h2M403 281h1M405 281h1M407 281h1M410 281h1M413 281h1M415 281h1M417 281h4M422 281h1M426 281h2M429 281h1M431 281h1M433 281h1M436 281h1M438 281h1M442 281h2M445 281h4M450 281h3M454 281h1M458 281h1M466 281h1M472 281h1M404 282h2M408 282h2M411 282h2M420 282h6M428 282h1M430 282h1M432 282h1M434 282h2M438 282h3M442 282h1M445 282h1M447 282h5M453 282h2M458 282h1M460 282h1M470 282h1M408 283h1M411 283h1M421 283h1M424 283h1M426 283h2M429 283h1M431 283h1M433 283h3M437 283h4M442 283h2M446 283h1M448 283h1M450 283h1M454 283h1M459 283h1M464 283h1M406 284h2M415 284h1M421 284h1M424 284h1M427 284h1M434 284h2M437 284h2M442 284h1M450 284h1M455 284h2M470 284h1M407 285h1M410 285h1M414 285h1M419 285h1M430 285h2M433 285h1M436 285h1M441 285h1M443 285h1M445 285h1M449 285h2M404 286h1M418 286h2M423 286h1M433 286h1M437 286h1M452 286h1M454 286h1M411 287h1M429 287h1M431 287h1M438 287h1M443 287h1M449 287h1M439 288h1M447 288h1M454 288h1M417 289h1M432 289h1M432 291h1" stroke="#d1dcd4" stroke-width="1" fill="none" shape-rendering="crispEdges" transform="translate(0,.5)"/>
<defs><clipPath id="bc"><polygon points="297.1,152.6 311.5,141.3 313.5,140.5 309,137 307,135.2 338.5,114.3 347.4,116.7 368.5,102.4 378.1,104 383.2,100.3 393.5,102 398.6,98.3 408.9,100.3 414,95.8 441.6,101.4 446.8,98.3 519.5,112.6 517.5,117.8 540,122.9 535.9,133.6 546.2,136.2 547.2,142.4 557.9,145.4 551,167.9 550,180.8 545.9,193.4 539.5,219.2 526.9,242.9 509.8,258 488.4,273 467,285.9 434.9,291.4 404.9,285.9 381.3,275.2 359.9,260.1 338.4,242.9 317,223.6 302.4,206.1 298.8,187 301.1,181.8 297.8,178.8 301.8,173.8 297.5,170.8 301.5,165.9 297.8,163 301.5,158 297.5,156"/></clipPath><linearGradient id="gf2" gradientUnits="userSpaceOnUse" x1="0" y1="170" x2="0" y2="290"><stop offset="0" stop-color="#8e9892" stop-opacity="0"/><stop offset="1" stop-color="#8e9892" stop-opacity=".55"/></linearGradient></defs>
<path d="M-292.9 437.7L-211.1 656.4M-299 76.4L384.8 685.5M-298.6 7.5L941.2 668.5M-299.6 -22.6L1269.9 573.4M-294.8 -37.6L1278.2 425.7M-259.8 -39.9L1283.6 331M-227.3 -42L1287.3 265.1M-197 -44L1290 216.6M-168.7 -45.8L1292.2 179.4M-142.3 -47.6L1293.8 149.9M-117.4 -49.2L1295.2 126M-94.1 -50.7L1296.3 106.3M-72.1 -52.2L1297.2 89.7M-51.4 -53.5L1298 75.5M-31.8 -54.8L1298.7 63.3M-13.2 -56L1299.3 52.7M4.3 -57.2L1299.8 43.3M21 -58.3L1281.3 33.6M36.9 -59.3L1282.8 26.4M51.9 -60.3L1284 19.8M66.3 -61.2L1285.2 13.9M80 -62.1L1286.3 8.6M93.1 -63L1287.2 3.7M105.6 -63.8L1288.1 -0.8M117.5 -64.6L1288.9 -4.9M129 -65.4L1289.6 -8.7M140 -66.1L1290.3 -12.2M150.5 -66.8L1291 -15.4M160.6 -67.4L1291.6 -18.5M170.3 -68.1L1292.1 -21.3M179.7 -68.7L1292.6 -23.9M188.7 -69.3L1293.1 -26.4M197.4 -69.8L1293.6 -28.7M205.7 -70.4L1294 -30.9M213.8 -70.9L1294.4 -33M221.5 -71.4L1294.8 -34.9M229 -71.9L1295.2 -36.8M236.3 -72.4L1295.5 -38.5M243.3 -72.9L1295.8 -40.2M250.1 -73.3L1296.1 -41.7M256.7 -73.7L1296.4 -43.2M263 -74.1L1296.7 -44.6M269.2 -74.5L1297 -46M275.1 -74.9L1297.2 -47.3M280.9 -75.3L1297.5 -48.5M286.6 -75.7L1297.7 -49.7M292 -76L1297.9 -50.8M297.3 -76.4L1298.1 -51.9M302.4 -76.7L1298.3 -53M307.4 -77.1L1298.5 -54M312.3 -77.4L1298.7 -54.9M317 -77.7L1298.9 -55.8M321.6 -78L1299.1 -56.7M326.1 -78.3L1299.3 -57.6M330.5 -78.6L1299.4 -58.4M334.7 -78.8L1299.6 -59.2M338.9 -79.1L1299.7 -60M342.9 -79.4L1299.9 -60.7M346.8 -79.6L1294.3 -61.5M350.7 -79.9L1294.5 -62.2M354.4 -80.1L1294.7 -62.9M358.1 -80.4L1295 -63.5M-294.8 -37.6L361.7 -80.6M-291.1 -36.5L366.6 -80.5M-296.8 -34.7L371.5 -80.4M-292.9 -33.5L376.5 -80.3M-298.9 -31.6L381.6 -80.3M-294.9 -30.2L386.7 -80.2M-290.8 -28.9L391.9 -80.1M-297.1 -26.6L397.2 -80M-292.8 -25.1L402.5 -79.9M-299.6 -22.6L407.9 -79.8M-295 -20.8L413.3 -79.7M-290.3 -19L418.9 -79.6M-297.6 -16.1L424.4 -79.5M-292.6 -14L430.1 -79.4M-287.3 -11.9L435.8 -79.3M-295.2 -8.3L441.6 -79.2M-289.7 -5.8L447.5 -79.1M-298.2 -1.8L453.4 -79M-292.3 1.1L459.4 -78.9M-286.1 4.1L465.5 -78.8M-295.4 9.2L471.7 -78.7M-288.8 12.8L477.9 -78.6M-299.1 18.7L484.3 -78.4M-291.9 23L490.7 -78.3M-284.2 27.6L497.2 -78.2M-295.8 35.4L503.8 -78.1M-287.4 41L510.5 -78M-278.2 47.1L517.2 -77.9M-291.3 57.6L524.1 -77.7M-281.2 65.3L531 -77.6M-296.4 78.7L538.1 -77.5M-285.1 88.8L545.2 -77.4M-272.4 100.1L552.5 -77.2M-290.2 120.3L559.8 -77.1M-275.6 135.9L567.3 -77M-297.5 164.7L574.8 -76.8M-280.3 187.7L582.5 -76.7M-259.7 215.2L590.3 -76.6M-287.6 269.3L598.2 -76.4M-261.3 316.2L606.2 -76.3M-227.3 376.8L614.3 -76.1M-264.5 513.6L622.5 -76M-211.1 656.4L630.9 -75.9M64.1 648.4L639.4 -75.7M334.4 640.6L648 -75.6M599.7 632.9L656.8 -75.4M860.3 625.3L665.7 -75.2M1116.2 617.9L674.7 -75.1M1294.3 537L683.9 -74.9M1266.9 347.4L693.2 -74.8M1287.3 265.1L702.7 -74.6M1270.6 193.4L712.3 -74.4M1284.5 155.4L722.1 -74.2M1295.2 126L732 -74.1M1283 96.2L742.1 -73.9M1291.5 78.3L752.4 -73.7M1298.7 63.3L762.8 -73.5M1289.2 47L773.4 -73.3M1295.4 36.6L784.2 -73.1M1287.5 25L795.2 -73M1292.9 17.3L806.4 -72.8M1297.7 10.6L817.8 -72.6M1291.1 2.7L829.3 -72.3M1295.4 -2.5L841.1 -72.1M1299.4 -7.3L853.1 -71.9M1293.6 -12.9L865.3 -71.7M1297.2 -16.7L877.8 -71.5M1292.1 -21.3L890.4 -71.3M1295.5 -24.5L903.3 -71M1298.6 -27.4L916.5 -70.8M1294 -30.9L929.9 -70.6M1296.9 -33.4L943.5 -70.3M1299.6 -35.7L957.4 -70.1M1295.5 -38.5L971.6 -69.8M1298.1 -40.5L986.1 -69.6M1294.3 -42.9L1000.8 -69.3M1296.7 -44.6L1015.9 -69.1M1299 -46.3L1031.2 -68.8M1295.5 -48.3L1046.9 -68.5M1297.7 -49.7L1062.9 -68.2M1299.8 -51.1L1079.2 -67.9M1296.6 -52.7L1095.9 -67.6M1298.5 -54L1113 -67.3M1295.5 -55.5L1130.4 -67M1297.4 -56.5L1148.2 -66.7M1299.3 -57.6L1166.4 -66.4M1296.5 -58.9L1185 -66.1M1298.2 -59.8L1204 -65.7M1299.9 -60.7L1223.4 -65.4M1297.2 -61.8L1243.3 -65M1298.9 -62.6L1263.7 -64.7M1296.4 -63.6L1284.6 -64.3" stroke="url(#gf2)" stroke-width="1" fill="none" clip-path="url(#bc)"/>
<g transform="translate(1,0)">
<path d="M476.300 0L469.500 125.200" stroke="#dcdcd8" stroke-width="1.300" opacity=".9"/>
<path d="M574.100 0L492.500 105.900" stroke="#c8c8c4" stroke-width="1.300" opacity=".9"/>
<path d="M492.500 105.900L469.500 135M469.500 125.200V135" stroke="#e4ebe6" stroke-width="1" opacity=".7"/></g>
<g transform="translate(1,0)">
<defs><linearGradient id="cg1" x1="0" y1="0" x2="1" y2="1"><stop offset="0" stop-color="#e8e8e8"/><stop offset="1" stop-color="#8c8c8c"/></linearGradient>
<linearGradient id="cg2" x1="0" y1="0" x2="1" y2="0"><stop offset="0" stop-color="#c0c0c0"/><stop offset=".5" stop-color="#ffffff"/><stop offset="1" stop-color="#b8b8b8"/></linearGradient>
<linearGradient id="cg3" x1="0" y1="0" x2="1" y2="0"><stop offset="0" stop-color="#4a9a1c"/><stop offset=".5" stop-color="#68c028"/><stop offset="1" stop-color="#4a9a1c"/></linearGradient></defs>
<path d="M826 58L813 62.500Q808 69 812.500 75.500Q818.500 78 822 72Z" fill="#74787c"/>
<ellipse cx="814.500" cy="69.500" rx="5" ry="8" transform="rotate(-38 814.500 69.500)" fill="#dcdcdc"/>
<path d="M830.500 58L825.500 71.500Q831 75 836.500 71.500Z" fill="url(#cg2)"/>
<path d="M838 54L859.500 51.500Q861.500 58 858.500 65Z" fill="url(#cg1)"/>
<path d="M822 47.500L806.500 40Q803.500 45.500 806.500 50.500Z" fill="#2f6fe0"/><path d="M822 47.500L806.500 40Q805 43 805.200 45.500Z" fill="#4a88f0"/>
<ellipse cx="840.300" cy="40" rx="5" ry="4.300" fill="#e03a1a"/><path d="M836 43L834 46L840 44.300Z" fill="#c02c10"/>
<path d="M822 46.500L830 42L839 45.500L839 56.500L831 61L822 57Z" fill="#b4b4b4"/><path d="M822 46.500L830 42L839 45.500L831 50Z" fill="#d2d2d2"/><path d="M831 50L839 45.500V56.500L831 61Z" fill="#a2a2a2"/>
<path d="M823 24.500Q831 27.500 839 24.500L831.500 42.500Z" fill="url(#cg3)"/><ellipse cx="831" cy="24" rx="8.200" ry="2.200" fill="#6cc42c"/>
<text x="827.500" y="16" font-family="DejaVu Sans,sans-serif" font-weight="bold" font-size="10" fill="#fff">y</text>
<text x="843" y="35.500" font-family="DejaVu Sans,sans-serif" font-weight="bold" font-size="10" fill="#fff">x</text>
<text x="799" y="45.500" font-family="DejaVu Sans,sans-serif" font-weight="bold" font-size="10" fill="#fff">z</text>
<rect x="863" y="16" width="7" height="5" fill="#c4c4c4"/><path d="M864.500 16V14a2 2 0 0 1 4 0" stroke="#c4c4c4" stroke-width="1.100" fill="none"/>
<path d="M816.500 96.500L807.500 100.700L816.500 105M807.500 100.700H816.500" stroke="#c4c4c4" stroke-width="1" fill="none"/>
<text x="820.800" y="105" font-family="DejaVu Sans,sans-serif" font-size="11" fill="#c4c4c4" letter-spacing=".2">Persp</text>
</g>
</svg>
<!-- INSPECTOR -->
<div class="tab" style="left:1090px;top:75px;width:99px"></div>
<svg class="a" style="left:1099px;top:78px" width="11" height="11" viewBox="0 0 11 11"><circle cx="5.500" cy="5.500" r="5" fill="#1a1a1a"/><path d="M5.500 2v1.600M4.300 4.800h1.600v3.400M4.200 8.300h3" stroke="#d8d8d8" stroke-width="1.300" fill="none"/></svg>
<div class="tabt" style="left:1114px;top:77px">Inspector</div>
<svg class="a" style="left:1200px;top:79px" width="11" height="10" viewBox="0 0 11 10"><path d="M0 1.500h4M6 1.500h5M0 5h7M9 5h2M0 8.500h3M5 8.500h6M5 0v3M8 3.500v3M4 7v3" stroke="#222" stroke-width="1"/></svg>
<div class="tabt" style="left:1214px;top:77px;letter-spacing:0">Lighting</div>
<svg class="a" style="left:1333px;top:80.700px" width="10" height="11" viewBox="0 0 10 11"><rect x="1" y="5" width="7" height="5" fill="#3a3a3a"/><path d="M2.500 5V3.200a2 2 0 0 1 4 0V4" stroke="#3a3a3a" stroke-width="1.200" fill="none"/></svg>
<svg class="a" style="left:1347px;top:85px" width="15" height="7" viewBox="0 0 15 7"><path d="M0 1h5L2.500 4.500z" fill="#2c2c2c"/><path d="M6 .5h8M6 2.500h8M6 4.500h8" stroke="#2c2c2c" stroke-width="1"/></svg>
<div class="panel" style="left:1090px;top:91px;width:276px;height:595px;border:1px solid #5e5e5e;border-right:none;background:#9e9e9e;box-shadow:inset 1px -1px 0 #b2b2b2"></div>
<!-- BOTTOM TABS -->
<svg class="a" style="left:8px;top:422px" width="11" height="9" viewBox="0 0 11 9"><path d="M.5 8.500v-7q0-1 1-1h2.500l1 1.500h4.500q1 0 1 1v5.500z" fill="#8e8e8e" stroke="#3a3a3a" stroke-width="1"/></svg>
<div class="tabt" style="left:23px;top:420px;letter-spacing:.35px">Project</div>
<svg class="a" style="left:109px;top:421px" width="9" height="11" viewBox="0 0 9 11"><rect x=".5" y=".5" width="8" height="10" fill="#b4b4b4" stroke="#2c2c2c"/><path d="M2 3h4M2 5.500h4M2 8h3" stroke="#2c2c2c" stroke-width=".9"/></svg>
<div class="tabt" style="left:123px;top:420px">Console</div>
<div class="tab" style="left:200px;top:418px;width:99px"></div>
<svg class="a" style="left:209px;top:421px" width="12" height="13" viewBox="0 0 12 13"><rect x="4.500" y="0" width="3" height="2.500" fill="#222"/><circle cx="6" cy="7.500" r="4.600" fill="#e0e0e0" stroke="#222" stroke-width="1.200"/><path d="M6 7.500V4.200A3.300 3.300 0 0 1 9.300 7.500z" fill="#e03030"/></svg>
<div class="tabt" style="left:223px;top:420px">Profiler</div>
<div class="tabt" style="left:306px;top:419px;letter-spacing:.2px">Frame Debug</div>
<svg class="a" style="left:1070px;top:428px" width="15" height="7" viewBox="0 0 15 7"><path d="M0 1h5L2.500 4.500z" fill="#2c2c2c"/><path d="M6 .5h8M6 2.500h8M6 4.500h8" stroke="#2c2c2c" stroke-width="1"/></svg>
<!-- PROFILER PANEL -->
<div class="panel" style="left:0;top:435px;width:1088px;height:251px;border-right:1px solid #5e5e5e;border-bottom:1px solid #5e5e5e;box-shadow:inset -1px -1px 0 #b2b2b2"></div>
<div class="tbar" style="left:0;top:435px;width:1087px">
 <div class="sep" style="left:5px"></div>
 <div class="tb" style="left:6px">Add Profiler</div><div class="dd" style="left:116px;top:5px;border-left-width:2.500px;border-right-width:2.500px;border-top-width:3px"></div>
 <div class="sep" style="left:125px"></div>
 <div class="sep" style="left:298px"></div>
 <div class="a" style="left:299px;top:0;width:58px;height:15px;background:linear-gradient(#cdcdcd,#bcbcbc)"></div>
 <svg class="a" style="left:306px;top:1px" width="10" height="12" viewBox="0 0 12 13"><rect x="4.500" y="0" width="3" height="2.500" fill="#222"/><circle cx="6" cy="7.500" r="4.600" fill="#e0e0e0" stroke="#222" stroke-width="1.200"/><path d="M6 7.500V4.200A3.300 3.300 0 0 1 9.300 7.500z" fill="#e03030"/></svg>
 <div class="tb" style="left:315px">Record</div>
 <div class="sep" style="left:358px"></div>
 <div class="tb" style="left:360px">Deep Profile</div>
 <div class="sep" style="left:430px"></div>
 <div class="tb" style="left:431px">Profile Editor</div>
 <div class="sep" style="left:505px"></div>
 <div class="tb" style="left:506px">Active Profiler</div><div class="dd" style="left:597px;top:5px;border-left-width:2.500px;border-right-width:2.500px;border-top-width:3px"></div>
 <div class="sep" style="left:605px"></div>
 <div class="tb" style="left:606px">Clear</div>
 <div class="sep" style="left:641px"></div>
 <div class="tb" style="left:821px;top:1px">Frame:</div>
 <div class="tb" style="left:873px;top:1px">Current</div>
 <div class="sep" style="left:971px"></div>
 <div class="a" style="left:980px;top:4px;width:0;height:0;border-top:4px solid transparent;border-bottom:4px solid transparent;border-right:5px solid #1c1c1c"></div>
 <div class="sep" style="left:997px"></div>
 <div class="a" style="left:1007px;top:4px;width:0;height:0;border-top:4px solid transparent;border-bottom:4px solid transparent;border-left:5px solid #6a6a6a"></div>
 <div class="sep" style="left:1023px"></div>
 <div class="sep" style="left:1033px"></div>
 <div class="tb" style="left:1033px">Current</div>
 <div class="sep" style="left:1080px"></div>
</div>
<!-- chart left label -->
<div class="a" style="left:0;top:452px;width:168px;height:117px;background:linear-gradient(#5f6f98,#8592b0)"></div>
<div class="a" style="left:168px;top:452px;width:2px;height:117px;background:#2a2a2a"></div>
<svg class="a" style="left:156px;top:456px" width="9" height="9" viewBox="0 0 9 9"><path d="M1 1l7 7M8 1l-7 7" stroke="#1c1c1c" stroke-width="1"/></svg>
<svg class="a" style="left:8px;top:461px" width="36" height="30" viewBox="0 0 36 30">
 <defs><linearGradient id="sw" x1="0" y1="0" x2="1" y2="1"><stop offset="0" stop-color="#e6e6e6"/><stop offset=".6" stop-color="#b8b8b8"/><stop offset="1" stop-color="#7c7c7c"/></linearGradient><clipPath id="lc"><circle cx="19.800" cy="8.400" r="5.600"/></clipPath></defs>
 <circle cx="10.400" cy="3.600" r="1.900" fill="#d4d4d4" stroke="#9a9a9a" stroke-width=".5"/><rect x="9.400" y="4.500" width="2.200" height="3" fill="#b0b0b0"/>
 <ellipse cx="13.300" cy="17" rx="10.600" ry="10.300" fill="url(#sw)"/>
 <ellipse cx="13.300" cy="16.400" rx="8.600" ry="8.200" fill="#ececec" stroke="#a8a8a8" stroke-width=".6"/>
 <path d="M7.500 13.500l1 .5M6.800 17.200h1.200M8.300 20.700l1-.6M11.200 22.800l.4-1M15 23l-.3-1M18.400 20.800l-1-.7M19.800 17h-1.200" stroke="#555" stroke-width=".9"/>
 <ellipse cx="17.300" cy="11.800" rx="6" ry="4.500" transform="rotate(25 17.300 11.800)" fill="#eea0a4" clip-path="url(#lc)"/>
 <path d="M10 16.600L14.800 15.900" stroke="#b01c24" stroke-width="1.500" stroke-linecap="round"/>
 <circle cx="19.800" cy="8.400" r="6.200" fill="rgba(255,255,255,.12)" stroke="#cfcfcf" stroke-width="1.300"/>
 <path d="M24.400 13.200L25.600 15" stroke="#c8c8c8" stroke-width="1.800"/>
 <path d="M25.400 15.400L31.200 23.800" stroke="#2c2c2c" stroke-width="2.800" stroke-linecap="round"/>
</svg>
<div class="t" style="left:49px;top:465px;font-size:12px;letter-spacing:.4px;color:#0a0a0a">CPU Usage</div>
<div class="lg" style="top:482px;background:#7c9c12"></div><div class="lt" style="top:481px">Rendering</div>
<div class="lg" style="top:493px;background:#2f8aa4"></div><div class="lt" style="top:492px">Scripts</div>
<div class="lg" style="top:504px;background:#c96a08"></div><div class="lt" style="top:503px">Physics</div>
<div class="lg" style="top:515px;background:#c8a212"></div><div class="lt" style="top:514px">VSync</div>
<div class="lg" style="top:526px;background:#766e08"></div><div class="lt" style="top:525px">GarbageCollector</div>
<div class="lg" style="top:537px;background:#8a2a08"></div><div class="lt" style="top:536px">Gi</div>
<div class="lg" style="top:548px;background:#5e4888"></div><div class="lt" style="top:547px">Native Memory</div>
<div class="lg" style="top:559px;background:#3b5c8a"></div><div class="lt" style="top:558px">Others</div>
<!-- chart -->
<div class="a" style="left:170px;top:452px;width:903px;height:117px;background:#383838"></div>
<svg class="a" style="left:170px;top:452px" width="903" height="117" viewBox="0 0 903 117">
<defs><linearGradient id="gb" x1="0" y1="0" x2="0" y2="1"><stop offset="0" stop-color="#3e93b4"/><stop offset="1" stop-color="#2f7c9c"/></linearGradient><linearGradient id="go" x1="0" y1="0" x2="0" y2="1"><stop offset=".4" stop-color="#d27a0a"/><stop offset="1" stop-color="#b96404"/></linearGradient></defs>
<rect x="0" y="0" width="903" height="4" fill="#2a2a2a"/>
<polygon points="0,116.7 0,107.1 1,107.1 1,106.8 2,106.8 2,106.7 3,106.7 3,106.7 4,106.7 4,106.8 5,106.8 5,106.9 6,106.9 6,107.1 7,107.1 7,107.3 8,107.3 8,107.4 9,107.4 9,107.4 10,107.4 10,107.3 11,107.3 11,107.2 12,107.2 12,107.2 13,107.2 13,107.2 14,107.2 14,107.3 15,107.3 15,107.4 16,107.4 16,107.5 17,107.5 17,107.6 18,107.6 18,107.6 19,107.6 19,107.5 20,107.5 20,107.2 21,107.2 21,107 22,107 22,106.8 23,106.8 23,106.6 24,106.6 24,106.6 25,106.6 25,106.7 26,106.7 26,100.3 27,100.3 27,91.4 28,91.4 28,76.4 29,76.4 29,76.4 30,76.4 30,73.9 31,73.9 31,66.8 32,66.8 32,56.8 33,56.8 33,40.5 34,40.5 34,20 35,20 35,6.9 36,6.9 36,19.2 37,19.2 37,40.8 38,40.8 38,56.4 39,56.4 39,67.2 40,67.2 40,73.4 41,73.4 41,70.1 42,70.1 42,61.6 43,61.6 43,50.6 44,50.6 44,42.7 45,42.7 45,49.9 46,49.9 46,62.1 47,62.1 47,52.7 48,52.7 48,47.2 49,47.2 49,53 50,53 50,63.7 51,63.7 51,70.7 52,70.7 52,74.6 53,74.6 53,76.6 54,76.6 54,76.9 55,76.9 55,77.7 56,77.7 56,77.4 57,77.4 57,74.4 58,74.4 58,70.4 59,70.4 59,62.9 60,62.9 60,52.2 61,52.2 61,45.7 62,45.7 62,54 63,54 63,63.7 64,63.7 64,70.2 65,70.2 65,75.3 66,75.3 66,74.2 67,74.2 67,70.7 68,70.7 68,65.2 69,65.2 69,57.9 70,57.9 70,51.9 71,51.9 71,58.6 72,58.6 72,66.3 73,66.3 73,71.7 74,71.7 74,74.7 75,74.7 75,76.7 76,76.7 76,77.4 77,77.4 77,77 78,77 78,76.9 79,76.9 79,75.9 80,75.9 80,73.8 81,73.8 81,69.6 82,69.6 82,64.5 83,64.5 83,57.4 84,57.4 84,53.5 85,53.5 85,56.7 86,56.7 86,61.5 87,61.5 87,64.8 88,64.8 88,67.9 89,67.9 89,71.1 90,71.1 90,73 91,73 91,74.3 92,74.3 92,77.1 93,77.1 93,73.9 94,73.9 94,70.5 95,70.5 95,62.6 96,62.6 96,50.9 97,50.9 97,43.7 98,43.7 98,52.2 99,52.2 99,62.2 100,62.2 100,70.9 101,70.9 101,75 102,75 102,76 103,76 103,76.8 104,76.8 104,76.4 105,76.4 105,73.9 106,73.9 106,68.2 107,68.2 107,59.5 108,59.5 108,47.4 109,47.4 109,37.8 110,37.8 110,46.4 111,46.4 111,60.9 112,60.9 112,68.8 113,68.8 113,60.9 114,60.9 114,48.1 115,48.1 115,39.7 116,39.7 116,49.5 117,49.5 117,61.7 118,61.7 118,69.1 119,69.1 119,64.1 120,64.1 120,53.7 121,53.7 121,46 122,46 122,53.8 123,53.8 123,62.8 124,62.8 124,68.8 125,68.8 125,62.3 126,62.3 126,49 127,49 127,40.4 128,40.4 128,48.1 129,48.1 129,61.8 130,61.8 130,70.2 131,70.2 131,73.8 132,73.8 132,75.3 133,75.3 133,74.9 134,74.9 134,71.1 135,71.1 135,65.8 136,65.8 136,59.2 137,59.2 137,52.3 138,52.3 138,40.4 139,40.4 139,34 140,34 140,42.1 141,42.1 141,55.9 142,55.9 142,65 143,65 143,70.9 144,70.9 144,72.6 145,72.6 145,67.5 146,67.5 146,57.1 147,57.1 147,40 148,40 148,19.4 149,19.4 149,6.9 150,6.9 150,19.5 151,19.5 151,39.7 152,39.7 152,55.7 153,55.7 153,66.7 154,66.7 154,74 155,74 155,76.7 156,76.7 156,76.5 157,76.5 157,75.8 158,75.8 158,94 159,94 159,100.4 160,100.4 160,106.9 161,106.9 161,106.7 162,106.7 162,106.7 163,106.7 163,106.7 164,106.7 164,106.9 165,106.9 165,107.2 166,107.2 166,107.4 167,107.4 167,107.6 168,107.6 168,107.7 169,107.7 169,107.7 170,107.7 170,107.6 171,107.6 171,107.4 172,107.4 172,107.2 173,107.2 173,107.1 174,107.1 174,107 175,107 175,107.1 176,107.1 176,107.1 177,107.1 177,107.2 178,107.2 178,107.2 179,107.2 179,107.2 180,107.2 180,107.1 181,107.1 181,106.9 182,106.9 182,106.8 183,106.8 183,106.8 184,106.8 184,106.9 185,106.9 185,107 186,107 186,107.3 187,107.3 187,107.5 188,107.5 188,107.7 189,107.7 189,107.8 190,107.8 190,107.8 191,107.8 191,107.6 192,107.6 192,107.4 193,107.4 193,107.1 194,107.1 194,106.9 195,106.9 195,106.8 196,106.8 196,106.9 197,106.9 197,107 198,107 198,107.1 199,107.1 199,107.2 200,107.2 200,107.2 201,107.2 201,107.2 202,107.2 202,107.1 203,107.1 203,107 204,107 204,107 205,107 205,107 206,107 206,106.7 207,106.7 207,104.8 208,104.8 208,100.5 209,100.5 209,98.8 210,98.8 210,102.6 211,102.6 211,106.4 212,106.4 212,107.4 213,107.4 213,107.3 214,107.3 214,107 215,107 215,106.8 216,106.8 216,106.7 217,106.7 217,106.7 218,106.7 218,100.2 219,100.2 219,92.6 220,92.6 220,77.1 221,77.1 221,77.2 222,77.2 222,76.5 223,76.5 223,74.8 224,74.8 224,64.1 225,64.1 225,48.1 226,48.1 226,21.6 227,21.6 227,5.8 228,5.8 228,14.8 229,14.8 229,32.5 230,32.5 230,47.8 231,47.8 231,59.9 232,59.9 232,66.7 233,66.7 233,73.4 234,73.4 234,75.1 235,75.1 235,73.7 236,73.7 236,67.7 237,67.7 237,56.5 238,56.5 238,39.2 239,39.2 239,29.4 240,29.4 240,38.8 241,38.8 241,56.7 242,56.7 242,66.5 243,66.5 243,61.7 244,61.7 244,51.9 245,51.9 245,43.3 246,43.3 246,51.5 247,51.5 247,61.8 248,61.8 248,68.1 249,68.1 249,58.7 250,58.7 250,42.7 251,42.7 251,34.9 252,34.9 252,43.4 253,43.4 253,58.9 254,58.9 254,69.1 255,69.1 255,58.8 256,58.8 256,45 257,45 257,35.2 258,35.2 258,44.9 259,44.9 259,59.7 260,59.7 260,67.6 261,67.6 261,61 262,61 262,47.7 263,47.7 263,37.7 264,37.7 264,47.1 265,47.1 265,60.5 266,60.5 266,68.2 267,68.2 267,60.9 268,60.9 268,46.7 269,46.7 269,38.7 270,38.7 270,47.8 271,47.8 271,61.4 272,61.4 272,69.6 273,69.6 273,60.4 274,60.4 274,49.3 275,49.3 275,41.7 276,41.7 276,49.5 277,49.5 277,60.5 278,60.5 278,70.2 279,70.2 279,60.8 280,60.8 280,49.8 281,49.8 281,40.1 282,40.1 282,49 283,49 283,62.2 284,62.2 284,68.6 285,68.6 285,62.8 286,62.8 286,51.1 287,51.1 287,44.1 288,44.1 288,52.3 289,52.3 289,63.3 290,63.3 290,70.8 291,70.8 291,70.7 292,70.7 292,63.4 293,63.4 293,52.4 294,52.4 294,43.2 295,43.2 295,52.3 296,52.3 296,62.5 297,62.5 297,70.2 298,70.2 298,61.7 299,61.7 299,48.2 300,48.2 300,39.7 301,39.7 301,48.8 302,48.8 302,62.2 303,62.2 303,68.4 304,68.4 304,55.7 305,55.7 305,25.6 306,25.6 306,6.1 307,6.1 307,24.6 308,24.6 308,54.2 309,54.2 309,68.5 310,68.5 310,59.9 311,59.9 311,45.2 312,45.2 312,36.3 313,36.3 313,45.1 314,45.1 314,59.3 315,59.3 315,69.4 316,69.4 316,59.8 317,59.8 317,45.1 318,45.1 318,36 319,36 319,44.4 320,44.4 320,59.9 321,59.9 321,68.2 322,68.2 322,62.8 323,62.8 323,51 324,51 324,44.7 325,44.7 325,51.6 326,51.6 326,63.3 327,63.3 327,70.6 328,70.6 328,73.8 329,73.8 329,75.2 330,75.2 330,69.6 331,69.6 331,63.3 332,63.3 332,54 333,54 333,45.5 334,45.5 334,54 335,54 335,62.7 336,62.7 336,71.4 337,71.4 337,74.5 338,74.5 338,75.2 339,75.2 339,69.8 340,69.8 340,60.4 341,60.4 341,49.1 342,49.1 342,40.7 343,40.7 343,48.6 344,48.6 344,62.1 345,62.1 345,68.8 346,68.8 346,73.7 347,73.7 347,75.4 348,75.4 348,70.2 349,70.2 349,63.4 350,63.4 350,51.9 351,51.9 351,46.1 352,46.1 352,52.4 353,52.4 353,62.4 354,62.4 354,69.8 355,69.8 355,71.9 356,71.9 356,65.9 357,65.9 357,61 358,61 358,51.9 359,51.9 359,42 360,42 360,36.7 361,36.7 361,41.5 362,41.5 362,51.9 363,51.9 363,60 364,60 364,65.6 365,65.6 365,71.6 366,71.6 366,71.3 367,71.3 367,64.7 368,64.7 368,54.5 369,54.5 369,48.1 370,48.1 370,54.8 371,54.8 371,64.1 372,64.1 372,70.9 373,70.9 373,64.3 374,64.3 374,53.2 375,53.2 375,46.5 376,46.5 376,53.2 377,53.2 377,62.5 378,62.5 378,71.1 379,71.1 379,72.7 380,72.7 380,69.7 381,69.7 381,66.4 382,66.4 382,61 383,61 383,53.9 384,53.9 384,47 385,47 385,36.9 386,36.9 386,26.1 387,26.1 387,21.3 388,21.3 388,29.9 389,29.9 389,47.5 390,47.5 390,60.2 391,60.2 391,68.1 392,68.1 392,66.7 393,66.7 393,58.5 394,58.5 394,54.7 395,54.7 395,58.1 396,58.1 396,66.4 397,66.4 397,72.4 398,72.4 398,70.4 399,70.4 399,65.6 400,65.6 400,60.9 401,60.9 401,55.8 402,55.8 402,52.4 403,52.4 403,56.8 404,56.8 404,62.5 405,62.5 405,69.7 406,69.7 406,72.1 407,72.1 407,74.7 408,74.7 408,77.1 409,77.1 409,77 410,77 410,76.6 411,76.6 411,76.1 412,76.1 412,75.8 413,75.8 413,75.6 414,75.6 414,75.3 415,75.3 415,71.4 416,71.4 416,64.1 417,64.1 417,54.4 418,54.4 418,47.6 419,47.6 419,55.3 420,55.3 420,63.7 421,63.7 421,69.9 422,69.9 422,74.1 423,74.1 423,74 424,74 424,69.9 425,69.9 425,63.1 426,63.1 426,55.4 427,55.4 427,47.1 428,47.1 428,55 429,55 429,64.4 430,64.4 430,70.8 431,70.8 431,74 432,74 432,76.2 433,76.2 433,75.9 434,75.9 434,74.4 435,74.4 435,71.3 436,71.3 436,68.6 437,68.6 437,66.6 438,66.6 438,62.2 439,62.2 439,59.6 440,59.6 440,62.2 441,62.2 441,65.7 442,65.7 442,69.8 443,69.8 443,71.9 444,71.9 444,73.3 445,73.3 445,70.1 446,70.1 446,64.8 447,64.8 447,55.1 448,55.1 448,48.1 449,48.1 449,54.2 450,54.2 450,64.3 451,64.3 451,71.3 452,71.3 452,75.2 453,75.2 453,75.3 454,75.3 454,69.4 455,69.4 455,62.3 456,62.3 456,51.9 457,51.9 457,44 458,44 458,51.7 459,51.7 459,62.6 460,62.6 460,70.4 461,70.4 461,74.7 462,74.7 462,75.6 463,75.6 463,76.1 464,76.1 464,75.4 465,75.4 465,75.6 466,75.6 466,73 467,73 467,70.7 468,70.7 468,68 469,68 469,63.4 470,63.4 470,59.3 471,59.3 471,53.1 472,53.1 472,48.5 473,48.5 473,52.9 474,52.9 474,59.5 475,59.5 475,66.1 476,66.1 476,70.2 477,70.2 477,73.7 478,73.7 478,75.8 479,75.8 479,77.1 480,77.1 480,74.1 481,74.1 481,70.2 482,70.2 482,65.1 483,65.1 483,55.9 484,55.9 484,48.2 485,48.2 485,55.3 486,55.3 486,64.8 487,64.8 487,70.8 488,70.8 488,64.5 489,64.5 489,54.4 490,54.4 490,47.4 491,47.4 491,54.5 492,54.5 492,63.4 493,63.4 493,71 494,71 494,62.8 495,62.8 495,51.4 496,51.4 496,45.9 497,45.9 497,52.4 498,52.4 498,62.7 499,62.7 499,70.6 500,70.6 500,69.1 501,69.1 501,62.6 502,62.6 502,51.6 503,51.6 503,43.3 504,43.3 504,52.5 505,52.5 505,61.8 506,61.8 506,70.8 507,70.8 507,65.5 508,65.5 508,56.8 509,56.8 509,51.1 510,51.1 510,57.7 511,57.7 511,65.7 512,65.7 512,71.6 513,71.6 513,74.2 514,74.2 514,73.3 515,73.3 515,65.5 516,65.5 516,49.3 517,49.3 517,24.6 518,24.6 518,10.2 519,10.2 519,24.1 520,24.1 520,45.3 521,45.3 521,61.5 522,61.5 522,71.7 523,71.7 523,74.7 524,74.7 524,75.8 525,75.8 525,76.2 526,76.2 526,74.5 527,74.5 527,71.9 528,71.9 528,67.6 529,67.6 529,63.6 530,63.6 530,57.2 531,57.2 531,49.8 532,49.8 532,44.9 533,44.9 533,49.2 534,49.2 534,57.9 535,57.9 535,64.5 536,64.5 536,68.7 537,68.7 537,71.7 538,71.7 538,75.2 539,75.2 539,69.9 540,69.9 540,63.3 541,63.3 541,53.6 542,53.6 542,46.3 543,46.3 543,54.8 544,54.8 544,64.4 545,64.4 545,69.8 546,69.8 546,74.1 547,74.1 547,75.6 548,75.6 548,69.7 549,69.7 549,63.9 550,63.9 550,53.1 551,53.1 551,46 552,46 552,52.8 553,52.8 553,63.2 554,63.2 554,68.9 555,68.9 555,61.8 556,61.8 556,50.6 557,50.6 557,42.5 558,42.5 558,50.8 559,50.8 559,62.7 560,62.7 560,69.6 561,69.6 561,61.3 562,61.3 562,49.6 563,49.6 563,41.2 564,41.2 564,49.9 565,49.9 565,61 566,61 566,69.7 567,69.7 567,63.6 568,63.6 568,52.4 569,52.4 569,45.8 570,45.8 570,52.8 571,52.8 571,68.1 572,68.1 572,75.1 573,75.1 573,81.1 574,81.1 574,81.9 575,81.9 575,86 576,86 576,83.7 577,83.7 577,78.1 578,78.1 578,72.2 579,72.2 579,65 580,65 580,58.7 581,58.7 581,53.1 582,53.1 582,57.2 583,57.2 583,66.1 584,66.1 584,72.7 585,72.7 585,78.2 586,78.2 586,79.2 587,79.2 587,72.2 588,72.2 588,65.8 589,65.8 589,57.9 590,57.9 590,54.6 591,54.6 591,58.6 592,58.6 592,66.8 593,66.8 593,73.3 594,73.3 594,78.2 595,78.2 595,82.2 596,82.2 596,81.9 597,81.9 597,79.6 598,79.6 598,76.7 599,76.7 599,72.9 600,72.9 600,68.8 601,68.8 601,66.2 602,66.2 602,61.8 603,61.8 603,57.6 604,57.6 604,54.8 605,54.8 605,58.8 606,58.8 606,63.9 607,63.9 607,67.5 608,67.5 608,72 609,72 609,76 610,76 610,78.4 611,78.4 611,81.5 612,81.5 612,81.9 613,81.9 613,79 614,79 614,76.4 615,76.4 615,73.9 616,73.9 616,73.2 617,73.2 617,69 618,69 618,67.8 619,67.8 619,65 620,65 620,66.9 621,66.9 621,69.5 622,69.5 622,73.2 623,73.2 623,77.2 624,77.2 624,78.6 625,78.6 625,81.7 626,81.7 626,82.5 627,82.5 627,85.7 628,85.7 628,86.2 629,86.2 629,85.5 630,85.5 630,84.3 631,84.3 631,76.2 632,76.2 632,66.3 633,66.3 633,54.2 634,54.2 634,39.8 635,39.8 635,25.1 636,25.1 636,17.3 637,17.3 637,25.4 638,25.4 638,40.8 639,40.8 639,55.5 640,55.5 640,66.2 641,66.2 641,77.4 642,77.4 642,84.5 643,84.5 643,85 644,85 644,85.3 645,85.3 645,86.3 646,86.3 646,83.4 647,83.4 647,77.8 648,77.8 648,72.4 649,72.4 649,66.2 650,66.2 650,58.1 651,58.1 651,52.9 652,52.9 652,59 653,59 653,64.8 654,64.8 654,72.5 655,72.5 655,79.1 656,79.1 656,76.3 657,76.3 657,70.6 658,70.6 658,61.6 659,61.6 659,51.6 660,51.6 660,47.1 661,47.1 661,51 662,51 662,61 663,61 663,70.4 664,70.4 664,77.6 665,77.6 665,83.3 666,83.3 666,85.7 667,85.7 667,83.6 668,83.6 668,78.1 669,78.1 669,71.5 670,71.5 670,64.3 671,64.3 671,57.8 672,57.8 672,52.9 673,52.9 673,57.2 674,57.2 674,65.3 675,65.3 675,72.3 676,72.3 676,78.3 677,78.3 677,77.5 678,77.5 678,72.2 679,72.2 679,64.8 680,64.8 680,56.4 681,56.4 681,52.4 682,52.4 682,56 683,56 683,64.7 684,64.7 684,71 685,71 685,76.6 686,76.6 686,74.9 687,74.9 687,71.8 688,71.8 688,67.3 689,67.3 689,64.2 690,64.2 690,61.5 691,61.5 691,56.2 692,56.2 692,52.4 693,52.4 693,49.4 694,49.4 694,54.6 695,54.6 695,63.4 696,63.4 696,71.9 697,71.9 697,75.4 698,75.4 698,74.5 699,74.5 699,72.1 700,72.1 700,70.3 701,70.3 701,66.1 702,66.1 702,64.9 703,64.9 703,61.4 704,61.4 704,58.6 705,58.6 705,55 706,55 706,52.7 707,52.7 707,49.9 708,49.9 708,47.8 709,47.8 709,53.9 710,53.9 710,63.3 711,63.3 711,71.2 712,71.2 712,79.4 713,79.4 713,77.3 714,77.3 714,76.5 715,76.5 715,75.1 716,75.1 716,72.1 717,72.1 717,71.5 718,71.5 718,68.9 719,68.9 719,65.5 720,65.5 720,64.5 721,64.5 721,61.1 722,61.1 722,59.9 723,59.9 723,56.4 724,56.4 724,53.4 725,53.4 725,51.5 726,51.5 726,49.8 727,49.8 727,54.5 728,54.5 728,63.8 729,63.8 729,72.8 730,72.8 730,79.1 731,79.1 731,82.9 732,82.9 732,83 733,83 733,79.5 734,79.5 734,77.5 735,77.5 735,73.4 736,73.4 736,69.4 737,69.4 737,64.9 738,64.9 738,60.1 739,60.1 739,55 740,55 740,49.9 741,49.9 741,46.9 742,46.9 742,52.2 743,52.2 743,63.2 744,63.2 744,70.8 745,70.8 745,72.6 746,72.6 746,61.3 747,61.3 747,47.1 748,47.1 748,37.9 749,37.9 749,44.9 750,44.9 750,58.3 751,58.3 751,67.9 752,67.9 752,67.6 753,67.6 753,59.5 754,59.5 754,55.1 755,55.1 755,59 756,59 756,67.4 757,67.4 757,74.2 758,74.2 758,78.7 759,78.7 759,77.8 760,77.8 760,72 761,72 761,65.9 762,65.9 762,57.6 763,57.6 763,53 764,53 764,57 765,57 765,65.6 766,65.6 766,71.8 767,71.8 767,67.1 768,67.1 768,59.9 769,59.9 769,55.7 770,55.7 770,58.9 771,58.9 771,66 772,66 772,73 773,73 773,65.8 774,65.8 774,59.3 775,59.3 775,54.3 776,54.3 776,58.7 777,58.7 777,66.3 778,66.3 778,73.5 779,73.5 779,78.4 780,78.4 780,77.9 781,77.9 781,71.9 782,71.9 782,64.6 783,64.6 783,57.1 784,57.1 784,51.9 785,51.9 785,56.9 786,56.9 786,64.3 787,64.3 787,72.4 788,72.4 788,77.8 789,77.8 789,80.9 790,80.9 790,76.7 791,76.7 791,69.8 792,69.8 792,65 793,65 793,62.5 794,62.5 794,64.5 795,64.5 795,69.8 796,69.8 796,75.3 797,75.3 797,79.3 798,79.3 798,78 799,78 799,73.4 800,73.4 800,67.3 801,67.3 801,60.2 802,60.2 802,55.7 803,55.7 803,59.1 804,59.1 804,65.9 805,65.9 805,73.6 806,73.6 806,69 807,69 807,65.8 808,65.8 808,62.5 809,62.5 809,60.1 810,60.1 810,56.4 811,56.4 811,53 812,53 812,57.8 813,57.8 813,66.6 814,66.6 814,73.9 815,73.9 815,80.6 816,80.6 816,83.1 817,83.1 817,83.1 818,83.1 818,80.5 819,80.5 819,77.9 820,77.9 820,75.3 821,75.3 821,70.8 822,70.8 822,68 823,68 823,64.9 824,64.9 824,68.6 825,68.6 825,73.6 826,73.6 826,77.3 827,77.3 827,82 828,82 828,81.5 829,81.5 829,80 830,80 830,78.2 831,78.2 831,75.7 832,75.7 832,73.3 833,73.3 833,69 834,69 834,65.1 835,65.1 835,62.9 836,62.9 836,58.6 837,58.6 837,53.6 838,53.6 838,52.8 839,52.8 839,56.4 840,56.4 840,65.2 841,65.2 841,73.3 842,73.3 842,79.2 843,79.2 843,81.3 844,81.3 844,76.8 845,76.8 845,72.2 846,72.2 846,68.6 847,68.6 847,63.9 848,63.9 848,61.3 849,61.3 849,64.6 850,64.6 850,71 851,71 851,75.5 852,75.5 852,79.5 853,79.5 853,76.8 854,76.8 854,74.4 855,74.4 855,71.4 856,71.4 856,67.6 857,67.6 857,63.7 858,63.7 858,61.1 859,61.1 859,58.7 860,58.7 860,62.1 861,62.1 861,68.4 862,68.4 862,76 863,76 863,80.8 864,80.8 864,82 865,82 865,73.2 866,73.2 866,59.3 867,59.3 867,42.7 868,42.7 868,25.9 869,25.9 869,15.6 870,15.6 870,26.2 871,26.2 871,43.6 872,43.6 872,58.6 873,58.6 873,72.4 874,72.4 874,82.7 875,82.7 875,82.6 876,82.6 876,77.9 877,77.9 877,72.3 878,72.3 878,67.3 879,67.3 879,60.7 880,60.7 880,52.7 881,52.7 881,50.2 882,50.2 882,53.7 883,53.7 883,64.1 884,64.1 884,72.5 885,72.5 885,78.3 886,78.3 886,77.3 887,77.3 887,75.2 888,75.2 888,72.6 889,72.6 889,69.2 890,69.2 890,67.6 891,67.6 891,64.1 892,64.1 892,61.6 893,61.6 893,57.8 894,57.8 894,55.3 895,55.3 895,50.7 896,50.7 896,48.6 897,48.6 897,55 898,55 898,64.3 899,64.3 899,71.9 900,71.9 900,78.4 901,78.4 901,84.8 902,84.8 902,85.6 903,85.6 903,116.7" fill="#7f9a10"/>
<polygon points="0,116.7 0,112.1 1,112.1 1,111.8 2,111.8 2,111.7 3,111.7 3,111.7 4,111.7 4,111.8 5,111.8 5,111.9 6,111.9 6,112.1 7,112.1 7,112.3 8,112.3 8,112.4 9,112.4 9,112.4 10,112.4 10,112.3 11,112.3 11,112.2 12,112.2 12,112.2 13,112.2 13,112.2 14,112.2 14,112.3 15,112.3 15,112.4 16,112.4 16,112.5 17,112.5 17,112.6 18,112.6 18,112.6 19,112.6 19,112.5 20,112.5 20,112.2 21,112.2 21,112 22,112 22,111.8 23,111.8 23,111.6 24,111.6 24,111.6 25,111.6 25,111.7 26,111.7 26,105.3 27,105.3 27,98.4 28,98.4 28,83.4 29,83.4 29,83.4 30,83.4 30,80.3 31,80.3 31,72.2 32,72.2 32,60.6 33,60.6 33,44.1 34,44.1 34,23.6 35,23.6 35,10.5 36,10.5 36,22.8 37,22.8 37,44.4 38,44.4 38,60.2 39,60.2 39,72.6 40,72.6 40,79.8 41,79.8 41,76 42,76 42,66.3 43,66.3 43,54.2 44,54.2 44,46.3 45,46.3 45,53.5 46,53.5 46,66.8 47,66.8 47,56.3 48,56.3 48,50.8 49,50.8 49,56.6 50,56.6 50,68.6 51,68.6 51,76.7 52,76.7 52,81.3 53,81.3 53,83.6 54,83.6 54,83.9 55,83.9 55,84.7 56,84.7 56,84.4 57,84.4 57,81.1 58,81.1 58,76.4 59,76.4 59,67.8 60,67.8 60,55.8 61,55.8 61,49.3 62,49.3 62,57.6 63,57.6 63,68.6 64,68.6 64,76.3 65,76.3 65,82 66,82 66,81 67,81 67,76.9 68,76.9 68,70.5 69,70.5 69,61.9 70,61.9 70,55.5 71,55.5 71,62.6 72,62.6 72,71.6 73,71.6 73,77.9 74,77.9 74,81.4 75,81.4 75,83.6 76,83.6 76,84.4 77,84.4 77,84 78,84 78,83.9 79,83.9 79,82.7 80,82.7 80,80.2 81,80.2 81,75.5 82,75.5 82,69.6 83,69.6 83,61.5 84,61.5 84,57.1 85,57.1 85,60.6 86,60.6 86,66 87,66 87,70 88,70 88,73.7 89,73.7 89,77.3 90,77.3 90,79.5 91,79.5 91,81.1 92,81.1 92,84 93,84 93,80.6 94,80.6 94,76.5 95,76.5 95,67.4 96,67.4 96,54.5 97,54.5 97,47.3 98,47.3 98,55.8 99,55.8 99,67 100,67 100,76.9 101,76.9 101,81.7 102,81.7 102,83 103,83 103,83.8 104,83.8 104,83.4 105,83.4 105,80.5 106,80.5 106,74 107,74 107,63.8 108,63.8 108,51 109,51 109,41.4 110,41.4 110,50 111,50 111,65.2 112,65.2 112,74.6 113,74.6 113,65.5 114,65.5 114,51.7 115,51.7 115,43.3 116,43.3 116,53.1 117,53.1 117,66.3 118,66.3 118,75 119,75 119,69 120,69 120,57.3 121,57.3 121,49.6 122,49.6 122,57.4 123,57.4 123,67.7 124,67.7 124,74.6 125,74.6 125,66.8 126,66.8 126,52.6 127,52.6 127,44 128,44 128,51.7 129,51.7 129,66.4 130,66.4 130,76 131,76 131,80.4 132,80.4 132,82.2 133,82.2 133,81.5 134,81.5 134,77.2 135,77.2 135,71.1 136,71.1 136,63.6 137,63.6 137,55.9 138,55.9 138,44 139,44 139,37.6 140,37.6 140,45.7 141,45.7 141,59.5 142,59.5 142,70 143,70 143,76.9 144,76.9 144,79.1 145,79.1 145,72.9 146,72.9 146,60.9 147,60.9 147,43.6 148,43.6 148,23 149,23 149,10.5 150,10.5 150,23.1 151,23.1 151,43.3 152,43.3 152,59.5 153,59.5 153,72.1 154,72.1 154,80.4 155,80.4 155,83.6 156,83.6 156,83.5 157,83.5 157,82.8 158,82.8 158,99 159,99 159,105.4 160,105.4 160,111.9 161,111.9 161,111.7 162,111.7 162,111.7 163,111.7 163,111.7 164,111.7 164,111.9 165,111.9 165,112.2 166,112.2 166,112.4 167,112.4 167,112.6 168,112.6 168,112.7 169,112.7 169,112.7 170,112.7 170,112.6 171,112.6 171,112.4 172,112.4 172,112.2 173,112.2 173,112.1 174,112.1 174,112 175,112 175,112.1 176,112.1 176,112.1 177,112.1 177,112.2 178,112.2 178,112.2 179,112.2 179,112.2 180,112.2 180,112.1 181,112.1 181,111.9 182,111.9 182,111.8 183,111.8 183,111.8 184,111.8 184,111.9 185,111.9 185,112 186,112 186,112.3 187,112.3 187,112.5 188,112.5 188,112.7 189,112.7 189,112.8 190,112.8 190,112.8 191,112.8 191,112.6 192,112.6 192,112.4 193,112.4 193,112.1 194,112.1 194,111.9 195,111.9 195,111.8 196,111.8 196,111.9 197,111.9 197,112 198,112 198,112.1 199,112.1 199,112.2 200,112.2 200,112.2 201,112.2 201,112.2 202,112.2 202,112.1 203,112.1 203,112 204,112 204,112 205,112 205,112 206,112 206,112.1 207,112.1 207,112.3 208,112.3 208,112.5 209,112.5 209,112.7 210,112.7 210,112.8 211,112.8 211,112.7 212,112.7 212,112.5 213,112.5 213,112.3 214,112.3 214,112 215,112 215,111.8 216,111.8 216,111.7 217,111.7 217,111.7 218,111.7 218,105.2 219,105.2 219,99.6 220,99.6 220,84.1 221,84.1 221,84.2 222,84.2 222,83.5 223,83.5 223,81.3 224,81.3 224,69.2 225,69.2 225,51.7 226,51.7 226,25.2 227,25.2 227,9.4 228,9.4 228,18.4 229,18.4 229,36.1 230,36.1 230,51.4 231,51.4 231,64.2 232,64.2 232,72.2 233,72.2 233,79.7 234,79.7 234,82 235,82 235,80.2 236,80.2 236,73.2 237,73.2 237,60.4 238,60.4 238,42.8 239,42.8 239,33 240,33 240,42.4 241,42.4 241,60.5 242,60.5 242,72 243,72 243,66.4 244,66.4 244,55.5 245,55.5 245,46.9 246,46.9 246,55.1 247,55.1 247,66.6 248,66.6 248,73.8 249,73.8 249,62.8 250,62.8 250,46.3 251,46.3 251,38.5 252,38.5 252,47 253,47 253,63.1 254,63.1 254,74.8 255,74.8 255,63.1 256,63.1 256,48.6 257,48.6 257,38.8 258,38.8 258,48.5 259,48.5 259,63.9 260,63.9 260,73.3 261,73.3 261,65.4 262,65.4 262,51.3 263,51.3 263,41.3 264,41.3 264,50.7 265,50.7 265,64.9 266,64.9 266,74 267,74 267,65.3 268,65.3 268,50.3 269,50.3 269,42.3 270,42.3 270,51.4 271,51.4 271,65.9 272,65.9 272,75.4 273,75.4 273,65 274,65 274,52.9 275,52.9 275,45.3 276,45.3 276,53.1 277,53.1 277,65.1 278,65.1 278,76 279,76 279,65.3 280,65.3 280,53.4 281,53.4 281,43.7 282,43.7 282,52.6 283,52.6 283,66.8 284,66.8 284,74.5 285,74.5 285,67.6 286,67.6 286,54.7 287,54.7 287,47.7 288,47.7 288,55.9 289,55.9 289,68.1 290,68.1 290,76.7 291,76.7 291,76.7 292,76.7 292,68.2 293,68.2 293,56 294,56 294,46.8 295,46.8 295,55.9 296,55.9 296,67.3 297,67.3 297,76 298,76 298,66.3 299,66.3 299,51.8 300,51.8 300,43.3 301,43.3 301,52.4 302,52.4 302,66.7 303,66.7 303,74.3 304,74.3 304,59.3 305,59.3 305,29.2 306,29.2 306,9.7 307,9.7 307,28.2 308,28.2 308,57.8 309,57.8 309,74.3 310,74.3 310,64.3 311,64.3 311,48.8 312,48.8 312,39.9 313,39.9 313,48.7 314,48.7 314,63.6 315,63.6 315,75.1 316,75.1 316,64 317,64 317,48.7 318,48.7 318,39.6 319,39.6 319,48 320,48 320,64.1 321,64.1 321,74 322,74 322,67.6 323,67.6 323,54.6 324,54.6 324,48.3 325,48.3 325,55.2 326,55.2 326,68.1 327,68.1 327,76.6 328,76.6 328,80.5 329,80.5 329,81.9 330,81.9 330,75.7 331,75.7 331,68.2 332,68.2 332,57.6 333,57.6 333,49.1 334,49.1 334,57.6 335,57.6 335,67.6 336,67.6 336,77.4 337,77.4 337,81.2 338,81.2 338,81.9 339,81.9 339,75.7 340,75.7 340,65 341,65 341,52.7 342,52.7 342,44.3 343,44.3 343,52.2 344,52.2 344,66.7 345,66.7 345,74.7 346,74.7 346,80.4 347,80.4 347,82.1 348,82.1 348,76.2 349,76.2 349,68.2 350,68.2 350,55.5 351,55.5 351,49.7 352,49.7 352,56 353,56 353,67.2 354,67.2 354,75.8 355,75.8 355,78 356,78 356,71.3 357,71.3 357,65.4 358,65.4 358,55.5 359,55.5 359,45.6 360,45.6 360,40.3 361,40.3 361,45.1 362,45.1 362,55.5 363,55.5 363,64.5 364,64.5 364,71 365,71 365,77.7 366,77.7 366,77.4 367,77.4 367,69.7 368,69.7 368,58.1 369,58.1 369,51.7 370,51.7 370,58.4 371,58.4 371,69.1 372,69.1 372,76.9 373,76.9 373,69.2 374,69.2 374,56.8 375,56.8 375,50.1 376,50.1 376,56.8 377,56.8 377,67.4 378,67.4 378,77.1 379,77.1 379,79.2 380,79.2 380,75.6 381,75.6 381,71.7 382,71.7 382,65.5 383,65.5 383,57.5 384,57.5 384,50.6 385,50.6 385,40.5 386,40.5 386,29.7 387,29.7 387,24.9 388,24.9 388,33.5 389,33.5 389,51.1 390,51.1 390,64.6 391,64.6 391,73.9 392,73.9 392,72.1 393,72.1 393,62.7 394,62.7 394,58.3 395,58.3 395,62.3 396,62.3 396,71.8 397,71.8 397,78.7 398,78.7 398,76.3 399,76.3 399,71 400,71 400,65.6 401,65.6 401,59.5 402,59.5 402,56 403,56 403,60.6 404,60.6 404,67.4 405,67.4 405,75.4 406,75.4 406,78.5 407,78.5 407,81.5 408,81.5 408,84.1 409,84.1 409,84 410,84 410,83.6 411,83.6 411,83.1 412,83.1 412,82.8 413,82.8 413,82.6 414,82.6 414,82.1 415,82.1 415,77.4 416,77.4 416,69.1 417,69.1 417,58 418,58 418,51.2 419,51.2 419,58.9 420,58.9 420,68.7 421,68.7 421,76 422,76 422,80.8 423,80.8 423,80.7 424,80.7 424,76 425,76 425,68.1 426,68.1 426,59 427,59 427,50.7 428,50.7 428,58.6 429,58.6 429,69.4 430,69.4 430,76.9 431,76.9 431,80.7 432,80.7 432,83.2 433,83.2 433,82.7 434,82.7 434,81 435,81 435,77.5 436,77.5 436,74.5 437,74.5 437,71.8 438,71.8 438,66.8 439,66.8 439,63.9 440,63.9 440,66.9 441,66.9 441,71 442,71 442,75.7 443,75.7 443,78.2 444,78.2 444,79.9 445,79.9 445,76.1 446,76.1 446,69.8 447,69.8 447,58.7 448,58.7 448,51.7 449,51.7 449,57.8 450,57.8 450,69.3 451,69.3 451,77.3 452,77.3 452,81.9 453,81.9 453,82 454,82 454,75.4 455,75.4 455,67.1 456,67.1 456,55.5 457,55.5 457,47.6 458,47.6 458,55.3 459,55.3 459,67.4 460,67.4 460,76.3 461,76.3 461,81.4 462,81.4 462,82.6 463,82.6 463,83.1 464,83.1 464,82.3 465,82.3 465,82.3 466,82.3 466,79.4 467,79.4 467,76.7 468,76.7 468,73.5 469,73.5 469,68.3 470,68.3 470,63.4 471,63.4 471,56.7 472,56.7 472,52.1 473,52.1 473,56.5 474,56.5 474,63.9 475,63.9 475,71.3 476,71.3 476,76.1 477,76.1 477,80.1 478,80.1 478,82.6 479,82.6 479,84 480,84 480,80.8 481,80.8 481,76.3 482,76.3 482,70.2 483,70.2 483,59.6 484,59.6 484,51.8 485,51.8 485,59 486,59 486,69.8 487,69.8 487,76.9 488,76.9 488,69.5 489,69.5 489,58 490,58 490,51 491,51 491,58.1 492,58.1 492,68.4 493,68.4 493,77 494,77 494,67.6 495,67.6 495,55 496,55 496,49.5 497,49.5 497,56 498,56 498,67.6 499,67.6 499,76.6 500,76.6 500,75.1 501,75.1 501,67.3 502,67.3 502,55.2 503,55.2 503,46.9 504,46.9 504,56.1 505,56.1 505,66.6 506,66.6 506,76.8 507,76.8 507,70.7 508,70.7 508,60.7 509,60.7 509,54.7 510,54.7 510,61.6 511,61.6 511,70.9 512,70.9 512,77.8 513,77.8 513,80.9 514,80.9 514,79.9 515,79.9 515,70.8 516,70.8 516,52.9 517,52.9 517,28.2 518,28.2 518,13.8 519,13.8 519,27.7 520,27.7 520,48.9 521,48.9 521,66 522,66 522,77.7 523,77.7 523,81.6 524,81.6 524,82.8 525,82.8 525,83.1 526,83.1 526,81.2 527,81.2 527,78.2 528,78.2 528,73.3 529,73.3 529,68.5 530,68.5 530,61.2 531,61.2 531,53.4 532,53.4 532,48.5 533,48.5 533,52.8 534,52.8 534,61.9 535,61.9 535,69.4 536,69.4 536,74.4 537,74.4 537,78 538,78 538,81.9 539,81.9 539,75.9 540,75.9 540,68.3 541,68.3 541,57.2 542,57.2 542,49.9 543,49.9 543,58.4 544,58.4 544,69.3 545,69.3 545,75.8 546,75.8 546,80.8 547,80.8 547,82.3 548,82.3 548,75.7 549,75.7 549,68.8 550,68.8 550,56.7 551,56.7 551,49.6 552,49.6 552,56.4 553,56.4 553,68 554,68 554,74.8 555,74.8 555,66.5 556,66.5 556,54.2 557,54.2 557,46.1 558,46.1 558,54.4 559,54.4 559,67.3 560,67.3 560,75.5 561,75.5 561,65.9 562,65.9 562,53.2 563,53.2 563,44.8 564,44.8 564,53.5 565,53.5 565,65.6 566,65.6 566,75.6 567,75.6 567,68.5 568,68.5 568,56 569,56 569,49.4 570,49.4 570,56.4 571,56.4 571,68.6 572,68.6 572,75.7 573,75.7 573,81.9 574,81.9 574,82.7 575,82.7 575,86.8 576,86.8 576,84.5 577,84.5 577,78.8 578,78.8 578,72.7 579,72.7 579,65.4 580,65.4 580,58.9 581,58.9 581,53.3 582,53.3 582,57.5 583,57.5 583,66.5 584,66.5 584,73.3 585,73.3 585,78.9 586,78.9 586,79.9 587,79.9 587,72.8 588,72.8 588,66.3 589,66.3 589,58.2 590,58.2 590,54.8 591,54.8 591,58.9 592,58.9 592,67.3 593,67.3 593,73.9 594,73.9 594,78.9 595,78.9 595,83 596,83 596,82.7 597,82.7 597,80.3 598,80.3 598,77.4 599,77.4 599,73.4 600,73.4 600,69.2 601,69.2 601,66.6 602,66.6 602,62.1 603,62.1 603,57.9 604,57.9 604,55 605,55 605,59 606,59 606,64.3 607,64.3 607,68 608,68 608,72.6 609,72.6 609,76.6 610,76.6 610,79.1 611,79.1 611,82.3 612,82.3 612,82.6 613,82.6 613,79.7 614,79.7 614,77.1 615,77.1 615,74.5 616,74.5 616,73.8 617,73.8 617,69.5 618,69.5 618,68.2 619,68.2 619,65.4 620,65.4 620,67.4 621,67.4 621,70 622,70 622,73.8 623,73.8 623,77.8 624,77.8 624,79.3 625,79.3 625,82.5 626,82.5 626,83.3 627,83.3 627,86.5 628,86.5 628,87 629,87 629,86.3 630,86.3 630,85.1 631,85.1 631,76.9 632,76.9 632,66.7 633,66.7 633,54.4 634,54.4 634,40.1 635,40.1 635,25.4 636,25.4 636,17.5 637,17.5 637,25.7 638,25.7 638,41.1 639,41.1 639,55.8 640,55.8 640,66.7 641,66.7 641,78 642,78 642,85.3 643,85.3 643,85.8 644,85.8 644,86.1 645,86.1 645,87.1 646,87.1 646,84.2 647,84.2 647,78.5 648,78.5 648,73 649,73 649,66.6 650,66.6 650,58.3 651,58.3 651,53.2 652,53.2 652,59.2 653,59.2 653,65.2 654,65.2 654,73.1 655,73.1 655,79.8 656,79.8 656,76.9 657,76.9 657,71.1 658,71.1 658,61.9 659,61.9 659,51.9 660,51.9 660,47.3 661,47.3 661,51.3 662,51.3 662,61.3 663,61.3 663,70.9 664,70.9 664,78.2 665,78.2 665,84.1 666,84.1 666,86.5 667,86.5 667,84.4 668,84.4 668,78.8 669,78.8 669,72.1 670,72.1 670,64.7 671,64.7 671,58 672,58 672,53.1 673,53.1 673,57.4 674,57.4 674,65.7 675,65.7 675,72.9 676,72.9 676,79 677,79 677,78.2 678,78.2 678,72.8 679,72.8 679,65.2 680,65.2 680,56.7 681,56.7 681,52.6 682,52.6 682,56.2 683,56.2 683,65.1 684,65.1 684,71.5 685,71.5 685,77.2 686,77.2 686,75.5 687,75.5 687,72.3 688,72.3 688,67.8 689,67.8 689,64.5 690,64.5 690,61.8 691,61.8 691,56.4 692,56.4 692,52.6 693,52.6 693,49.6 694,49.6 694,54.8 695,54.8 695,63.8 696,63.8 696,72.5 697,72.5 697,76 698,76 698,75.1 699,75.1 699,72.7 700,72.7 700,70.8 701,70.8 701,66.6 702,66.6 702,65.3 703,65.3 703,61.7 704,61.7 704,58.8 705,58.8 705,55.2 706,55.2 706,52.9 707,52.9 707,50.2 708,50.2 708,48 709,48 709,54.1 710,54.1 710,63.6 711,63.6 711,71.7 712,71.7 712,80.1 713,80.1 713,78 714,78 714,77.2 715,77.2 715,75.8 716,75.8 716,72.7 717,72.7 717,72 718,72 718,69.4 719,69.4 719,65.9 720,65.9 720,64.9 721,64.9 721,61.4 722,61.4 722,60.2 723,60.2 723,56.6 724,56.6 724,53.6 725,53.6 725,51.7 726,51.7 726,50 727,50 727,54.8 728,54.8 728,64.2 729,64.2 729,73.4 730,73.4 730,79.8 731,79.8 731,83.7 732,83.7 732,83.8 733,83.8 733,80.2 734,80.2 734,78.2 735,78.2 735,74 736,74 736,69.9 737,69.9 737,65.3 738,65.3 738,60.4 739,60.4 739,55.2 740,55.2 740,50.1 741,50.1 741,47.2 742,47.2 742,52.5 743,52.5 743,63.6 744,63.6 744,71.3 745,71.3 745,73.2 746,73.2 746,61.6 747,61.6 747,47.3 748,47.3 748,38.2 749,38.2 749,45.1 750,45.1 750,58.6 751,58.6 751,68.3 752,68.3 752,68.1 753,68.1 753,59.8 754,59.8 754,55.4 755,55.4 755,59.3 756,59.3 756,67.8 757,67.8 757,74.8 758,74.8 758,79.4 759,79.4 759,78.5 760,78.5 760,72.5 761,72.5 761,66.3 762,66.3 762,57.9 763,57.9 763,53.3 764,53.3 764,57.3 765,57.3 765,66 766,66 766,72.4 767,72.4 767,67.5 768,67.5 768,60.1 769,60.1 769,55.9 770,55.9 770,59.1 771,59.1 771,66.4 772,66.4 772,73.5 773,73.5 773,66.2 774,66.2 774,59.5 775,59.5 775,54.6 776,54.6 776,58.9 777,58.9 777,66.7 778,66.7 778,74.1 779,74.1 779,79.1 780,79.1 780,78.6 781,78.6 781,72.5 782,72.5 782,65 783,65 783,57.3 784,57.3 784,52.1 785,52.1 785,57.1 786,57.1 786,64.7 787,64.7 787,72.9 788,72.9 788,78.5 789,78.5 789,81.6 790,81.6 790,77.3 791,77.3 791,70.3 792,70.3 792,65.4 793,65.4 793,62.8 794,62.8 794,64.9 795,64.9 795,70.3 796,70.3 796,75.9 797,75.9 797,80 798,80 798,78.7 799,78.7 799,73.9 800,73.9 800,67.7 801,67.7 801,60.5 802,60.5 802,56 803,56 803,59.3 804,59.3 804,66.3 805,66.3 805,74.2 806,74.2 806,69.5 807,69.5 807,66.2 808,66.2 808,62.9 809,62.9 809,60.3 810,60.3 810,56.6 811,56.6 811,53.2 812,53.2 812,58 813,58 813,67 814,67 814,74.5 815,74.5 815,81.3 816,81.3 816,83.9 817,83.9 817,83.9 818,83.9 818,81.2 819,81.2 819,78.6 820,78.6 820,75.9 821,75.9 821,71.3 822,71.3 822,68.4 823,68.4 823,65.3 824,65.3 824,69.1 825,69.1 825,74.2 826,74.2 826,78 827,78 827,82.8 828,82.8 828,82.3 829,82.3 829,80.8 830,80.8 830,78.9 831,78.9 831,76.3 832,76.3 832,73.8 833,73.8 833,69.5 834,69.5 834,65.6 835,65.6 835,63.2 836,63.2 836,58.9 837,58.9 837,53.9 838,53.9 838,53 839,53 839,56.6 840,56.6 840,65.6 841,65.6 841,73.9 842,73.9 842,79.9 843,79.9 843,82 844,82 844,77.4 845,77.4 845,72.7 846,72.7 846,69.1 847,69.1 847,64.2 848,64.2 848,61.5 849,61.5 849,64.9 850,64.9 850,71.5 851,71.5 851,76.2 852,76.2 852,80.2 853,80.2 853,77.5 854,77.5 854,75 855,75 855,71.9 856,71.9 856,68 857,68 857,64.1 858,64.1 858,61.4 859,61.4 859,58.9 860,58.9 860,62.4 861,62.4 861,68.9 862,68.9 862,76.6 863,76.6 863,81.5 864,81.5 864,82.7 865,82.7 865,73.8 866,73.8 866,59.6 867,59.6 867,43 868,43 868,26.1 869,26.1 869,15.8 870,15.8 870,26.4 871,26.4 871,43.9 872,43.9 872,58.9 873,58.9 873,73 874,73 874,83.4 875,83.4 875,83.4 876,83.4 876,78.6 877,78.6 877,72.9 878,72.9 878,67.7 879,67.7 879,61 880,61 880,53 881,53 881,50.5 882,50.5 882,54 883,54 883,64.4 884,64.4 884,73 885,73 885,79 886,79 886,77.9 887,77.9 887,75.9 888,75.9 888,73.2 889,73.2 889,69.7 890,69.7 890,68.1 891,68.1 891,64.5 892,64.5 892,61.8 893,61.8 893,58.1 894,58.1 894,55.6 895,55.6 895,50.9 896,50.9 896,48.9 897,48.9 897,55.2 898,55.2 898,64.7 899,64.7 899,72.5 900,72.5 900,79.1 901,79.1 901,85.6 902,85.6 902,86.4 903,86.4 903,116.7" fill="url(#gb)"/>
<polygon points="0,116.7 0,114.2 1,114.2 1,114.2 2,114.2 2,114.2 3,114.2 3,114.2 4,114.2 4,114.2 5,114.2 5,114.2 6,114.2 6,114.2 7,114.2 7,114.2 8,114.2 8,114.2 9,114.2 9,114.2 10,114.2 10,114.2 11,114.2 11,114.2 12,114.2 12,114.2 13,114.2 13,114.2 14,114.2 14,114.2 15,114.2 15,114.2 16,114.2 16,114.2 17,114.2 17,114.2 18,114.2 18,114.2 19,114.2 19,114.2 20,114.2 20,114.2 21,114.2 21,114.2 22,114.2 22,114.2 23,114.2 23,114.2 24,114.2 24,114.2 25,114.2 25,114.2 26,114.2 26,114.2 27,114.2 27,113.7 28,113.7 28,113.7 29,113.7 29,113.7 30,113.7 30,113.7 31,113.7 31,109.5 32,109.5 32,100.9 33,100.9 33,89.6 34,89.6 34,76.1 35,76.1 35,68.7 36,68.7 36,76.1 37,76.1 37,89.6 38,89.6 38,100.9 39,100.9 39,109.5 40,109.5 40,113.7 41,113.7 41,109.4 42,109.4 42,101.7 43,101.7 43,91.7 44,91.7 44,86 45,86 45,91.7 46,91.7 46,101.7 47,101.7 47,93.1 48,93.1 48,87.7 49,87.7 49,93.1 50,93.1 50,102.4 51,102.4 51,109.6 52,109.6 52,113.7 53,113.7 53,113.7 54,113.7 54,113.7 55,113.7 55,113.7 56,113.7 56,113.7 57,113.7 57,113.7 58,113.7 58,109.6 59,109.6 59,102.3 60,102.3 60,92.9 61,92.9 61,87.5 62,87.5 62,92.9 63,92.9 63,102.3 64,102.3 64,109.6 65,109.6 65,113.7 66,113.7 66,113.7 67,113.7 67,110 68,110 68,103.5 69,103.5 69,95.1 70,95.1 70,90.2 71,90.2 71,95.1 72,95.1 72,103.5 73,103.5 73,110 74,110 74,113.7 75,113.7 75,113.7 76,113.7 76,113.7 77,113.7 77,113.7 78,113.7 78,113.7 79,113.7 79,113.7 80,113.7 80,111.5 81,111.5 81,106.9 82,106.9 82,100.9 83,100.9 83,93.7 84,93.7 84,89.7 85,89.7 85,92.4 86,92.4 86,97.4 87,97.4 87,101.9 88,101.9 88,106 89,106 89,109.4 90,109.4 90,112.1 91,112.1 91,113.7 92,113.7 92,113.7 93,113.7 93,113.7 94,113.7 94,109.5 95,109.5 95,101.9 96,101.9 96,92.2 97,92.2 97,86.7 98,86.7 98,92.2 99,92.2 99,101.9 100,101.9 100,109.5 101,109.5 101,113.7 102,113.7 102,113.7 103,113.7 103,113.7 104,113.7 104,113.7 105,113.7 105,113.7 106,113.7 106,109.1 107,109.1 107,100.8 108,100.8 108,90.1 109,90.1 109,83.9 110,83.9 110,90.1 111,90.1 111,100.8 112,100.8 112,109.1 113,109.1 113,101.3 114,101.3 114,91.1 115,91.1 115,85.2 116,85.2 116,91.1 117,91.1 117,101.3 118,101.3 118,109.3 119,109.3 119,102.3 120,102.3 120,92.9 121,92.9 121,87.5 122,87.5 122,92.9 123,92.9 123,102.3 124,102.3 124,109.3 125,109.3 125,101.4 126,101.4 126,91.2 127,91.2 127,85.4 128,85.4 128,91.2 129,91.2 129,101.4 130,101.4 130,109.3 131,109.3 131,113.7 132,113.7 132,113.7 133,113.7 133,113.7 134,113.7 134,110.7 135,110.7 135,105.1 136,105.1 136,98 137,98 137,89.5 138,89.5 138,79.9 139,79.9 139,74.7 140,74.7 140,81.2 141,81.2 141,92.8 142,92.8 142,102.6 143,102.6 143,110.1 144,110.1 144,113.7 145,113.7 145,107.1 146,107.1 146,93.6 147,93.6 147,75.7 148,75.7 148,54.5 149,54.5 149,42.7 150,42.7 150,54.5 151,54.5 151,75.7 152,75.7 152,93.6 153,93.6 153,107.1 154,107.1 154,113.7 155,113.7 155,113.7 156,113.7 156,113.7 157,113.7 157,113.7 158,113.7 158,114.2 159,114.2 159,114.2 160,114.2 160,114.2 161,114.2 161,114.2 162,114.2 162,114.2 163,114.2 163,114.2 164,114.2 164,114.2 165,114.2 165,114.2 166,114.2 166,114.2 167,114.2 167,114.2 168,114.2 168,114.2 169,114.2 169,114.2 170,114.2 170,114.2 171,114.2 171,114.2 172,114.2 172,114.2 173,114.2 173,114.2 174,114.2 174,114.2 175,114.2 175,114.2 176,114.2 176,114.2 177,114.2 177,114.2 178,114.2 178,114.2 179,114.2 179,114.2 180,114.2 180,114.2 181,114.2 181,114.2 182,114.2 182,114.2 183,114.2 183,114.2 184,114.2 184,114.2 185,114.2 185,114.2 186,114.2 186,114.2 187,114.2 187,114.2 188,114.2 188,114.2 189,114.2 189,114.2 190,114.2 190,114.2 191,114.2 191,114.2 192,114.2 192,114.2 193,114.2 193,114.2 194,114.2 194,114.2 195,114.2 195,114.2 196,114.2 196,114.2 197,114.2 197,114.2 198,114.2 198,114.2 199,114.2 199,114.2 200,114.2 200,114.2 201,114.2 201,114.2 202,114.2 202,114.2 203,114.2 203,114.2 204,114.2 204,114.2 205,114.2 205,114.2 206,114.2 206,114.2 207,114.2 207,114.2 208,114.2 208,114.2 209,114.2 209,114.2 210,114.2 210,114.2 211,114.2 211,114.2 212,114.2 212,114.2 213,114.2 213,114.2 214,114.2 214,114.2 215,114.2 215,114.2 216,114.2 216,114.2 217,114.2 217,114.2 218,114.2 218,114.2 219,114.2 219,113.7 220,113.7 220,113.7 221,113.7 221,113.7 222,113.7 222,113.7 223,113.7 223,113.7 224,113.7 224,110 225,110 225,101.2 226,101.2 226,89.5 227,89.5 227,82.7 228,82.7 228,86.8 229,86.8 229,94.5 230,94.5 230,101.2 231,101.2 231,106.9 232,106.9 232,111.3 233,111.3 233,113.7 234,113.7 234,113.7 235,113.7 235,113.7 236,113.7 236,108.8 237,108.8 237,99.9 238,99.9 238,88.5 239,88.5 239,82 240,82 240,88.5 241,88.5 241,99.9 242,99.9 242,108.8 243,108.8 243,102.5 244,102.5 244,93.2 245,93.2 245,87.9 246,87.9 246,93.2 247,93.2 247,102.5 248,102.5 248,109.1 249,109.1 249,100.8 250,100.8 250,90.1 251,90.1 251,84.1 252,84.1 252,90.1 253,90.1 253,100.8 254,100.8 254,109.1 255,109.1 255,101.2 256,101.2 256,90.8 257,90.8 257,84.9 258,84.9 258,90.8 259,90.8 259,101.2 260,101.2 260,109.2 261,109.2 261,101.5 262,101.5 262,91.5 263,91.5 263,85.7 264,85.7 264,91.5 265,91.5 265,101.5 266,101.5 266,109.3 267,109.3 267,101.7 268,101.7 268,91.7 269,91.7 269,86.1 270,86.1 270,91.7 271,91.7 271,101.7 272,101.7 272,109.4 273,109.4 273,102 274,102 274,92.4 275,92.4 275,86.9 276,86.9 276,92.4 277,92.4 277,102 278,102 278,109.5 279,109.5 279,102 280,102 280,92.4 281,92.4 281,86.9 282,86.9 282,92.4 283,92.4 283,102 284,102 284,109.5 285,109.5 285,102.6 286,102.6 286,93.4 287,93.4 287,88.1 288,88.1 288,93.4 289,93.4 289,102.6 290,102.6 290,109.7 291,109.7 291,109.7 292,109.7 292,102.6 293,102.6 293,93.4 294,93.4 294,88.1 295,88.1 295,93.4 296,93.4 296,102.6 297,102.6 297,109.5 298,109.5 298,102 299,102 299,92.2 300,92.2 300,86.7 301,86.7 301,92.2 302,92.2 302,102 303,102 303,109.5 304,109.5 304,92.6 305,92.6 305,62.6 306,62.6 306,44.7 307,44.7 307,62.6 308,62.6 308,92.6 309,92.6 309,109.3 310,109.3 310,101.3 311,101.3 311,91.1 312,91.1 312,85.3 313,85.3 313,91.1 314,91.1 314,101.3 315,101.3 315,109.2 316,109.2 316,101.2 317,101.2 317,90.8 318,90.8 318,84.9 319,84.9 319,90.8 320,90.8 320,101.2 321,101.2 321,109.2 322,109.2 322,102.6 323,102.6 323,93.4 324,93.4 324,88.1 325,88.1 325,93.4 326,93.4 326,102.6 327,102.6 327,109.7 328,109.7 328,113.7 329,113.7 329,113.7 330,113.7 330,109.8 331,109.8 331,102.9 332,102.9 332,94 333,94 333,88.9 334,88.9 334,94 335,94 335,102.9 336,102.9 336,109.8 337,109.8 337,113.7 338,113.7 338,113.7 339,113.7 339,109.5 340,109.5 340,102 341,102 341,92.4 342,92.4 342,86.9 343,86.9 343,92.4 344,92.4 344,102 345,102 345,109.5 346,109.5 346,113.7 347,113.7 347,113.7 348,113.7 348,109.8 349,109.8 349,102.8 350,102.8 350,93.7 351,93.7 351,88.5 352,88.5 352,93.7 353,93.7 353,102.8 354,102.8 354,109.8 355,109.8 355,111.2 356,111.2 356,106.7 357,106.7 357,100.8 358,100.8 358,93.9 359,93.9 359,86 360,86 360,81.7 361,81.7 361,86 362,86 362,93.9 363,93.9 363,100.8 364,100.8 364,106.7 365,106.7 365,111.2 366,111.2 366,109.9 367,109.9 367,103.2 368,103.2 368,94.6 369,94.6 369,89.6 370,89.6 370,94.6 371,94.6 371,103.2 372,103.2 372,109.8 373,109.8 373,102.9 374,102.9 374,94 375,94 375,88.9 376,88.9 376,94 377,94 377,102.9 378,102.9 378,109.8 379,109.8 379,113.5 380,113.5 380,110.8 381,110.8 381,106.4 382,106.4 382,101 383,101 383,94.6 384,94.6 384,87.3 385,87.3 385,79.4 386,79.4 386,70.8 387,70.8 387,66.2 388,66.2 388,74.1 389,74.1 389,88.3 390,88.3 390,100.2 391,100.2 391,109.3 392,109.3 392,103.8 393,103.8 393,95.6 394,95.6 394,90.9 395,90.9 395,95.6 396,95.6 396,103.8 397,103.8 397,110.1 398,110.1 398,107.8 399,107.8 399,102.8 400,102.8 400,97 401,97 401,90.3 402,90.3 402,86.7 403,86.7 403,91.2 404,91.2 404,99.3 405,99.3 405,106 406,106 406,111.2 407,111.2 407,113.7 408,113.7 408,113.7 409,113.7 409,113.7 410,113.7 410,113.7 411,113.7 411,113.7 412,113.7 412,113.7 413,113.7 413,113.7 414,113.7 414,113.7 415,113.7 415,109.7 416,109.7 416,102.6 417,102.6 417,93.5 418,93.5 418,88.3 419,88.3 419,93.5 420,93.5 420,102.6 421,102.6 421,109.7 422,109.7 422,113.7 423,113.7 423,113.7 424,113.7 424,109.7 425,109.7 425,102.6 426,102.6 426,93.5 427,93.5 427,88.3 428,88.3 428,93.5 429,93.5 429,102.6 430,102.6 430,109.7 431,109.7 431,113.7 432,113.7 432,113.7 433,113.7 433,113.7 434,113.7 434,112.1 435,112.1 435,109.1 436,109.1 436,105.2 437,105.2 437,100.7 438,100.7 438,95.5 439,95.5 439,92.7 440,92.7 440,95.5 441,95.5 441,100.7 442,100.7 442,105.2 443,105.2 443,109.1 444,109.1 444,112.1 445,112.1 445,109.9 446,109.9 446,103.2 447,103.2 447,94.6 448,94.6 448,89.6 449,89.6 449,94.6 450,94.6 450,103.2 451,103.2 451,109.9 452,109.9 452,113.7 453,113.7 453,113.7 454,113.7 454,109.7 455,109.7 455,102.6 456,102.6 456,93.5 457,93.5 457,88.2 458,88.2 458,93.5 459,93.5 459,102.6 460,102.6 460,109.7 461,109.7 461,113.7 462,113.7 462,113.7 463,113.7 463,113.7 464,113.7 464,113.7 465,113.7 465,113.6 466,113.6 466,111.9 467,111.9 467,108.9 468,108.9 468,105 469,105 469,100.5 470,100.5 470,95.4 471,95.4 471,89.7 472,89.7 472,86.7 473,86.7 473,90.3 474,90.3 474,97 475,97 475,102.8 476,102.8 476,107.8 477,107.8 477,111.6 478,111.6 478,113.7 479,113.7 479,113.7 480,113.7 480,113.7 481,113.7 481,109.8 482,109.8 482,102.9 483,102.9 483,93.9 484,93.9 484,88.8 485,88.8 485,93.9 486,93.9 486,102.9 487,102.9 487,109.7 488,109.7 488,102.6 489,102.6 489,93.5 490,93.5 490,88.3 491,88.3 491,93.5 492,93.5 492,102.6 493,102.6 493,109.6 494,109.6 494,102.2 495,102.2 495,92.6 496,92.6 496,87.1 497,87.1 497,92.6 498,92.6 498,102.2 499,102.2 499,109.6 500,109.6 500,109.5 501,109.5 501,101.9 502,101.9 502,92.2 503,92.2 503,86.7 504,86.7 504,92.2 505,92.2 505,101.9 506,101.9 506,109.5 507,109.5 507,103.2 508,103.2 508,94.6 509,94.6 509,89.6 510,89.6 510,94.6 511,94.6 511,103.2 512,103.2 512,109.9 513,109.9 513,113.7 514,113.7 514,113.7 515,113.7 515,106.1 516,106.1 516,88.1 517,88.1 517,64.1 518,64.1 518,50.2 519,50.2 519,62.2 520,62.2 520,83.4 521,83.4 521,100.5 522,100.5 522,112 523,112 523,113.7 524,113.7 524,113.7 525,113.7 525,113.7 526,113.7 526,113.7 527,113.7 527,111.5 528,111.5 528,107.6 529,107.6 529,102.4 530,102.4 530,96.3 531,96.3 531,89.4 532,89.4 532,85.7 533,85.7 533,89.4 534,89.4 534,96.3 535,96.3 535,102.4 536,102.4 536,107.6 537,107.6 537,111.5 538,111.5 538,113.7 539,113.7 539,109.4 540,109.4 540,101.6 541,101.6 541,91.6 542,91.6 542,85.9 543,85.9 543,91.6 544,91.6 544,101.6 545,101.6 545,109.4 546,109.4 546,113.7 547,113.7 547,113.7 548,113.7 548,109.2 549,109.2 549,101.2 550,101.2 550,90.9 551,90.9 551,85 552,85 552,90.9 553,90.9 553,101.2 554,101.2 554,109 555,109 555,100.6 556,100.6 556,89.8 557,89.8 557,83.6 558,83.6 558,89.8 559,89.8 559,100.6 560,100.6 560,108.9 561,108.9 561,100.4 562,100.4 562,89.4 563,89.4 563,83.1 564,83.1 564,89.4 565,89.4 565,100.4 566,100.4 566,108.9 567,108.9 567,101.2 568,101.2 568,90.9 569,90.9 569,85 570,85 570,90.9 571,90.9 571,101.2 572,101.2 572,109.2 573,109.2 573,113.7 574,113.7 574,113.7 575,113.7 575,113.7 576,113.7 576,113.7 577,113.7 577,111.2 578,111.2 578,105.6 579,105.6 579,98.1 580,98.1 580,89 581,89 581,84.1 582,84.1 582,89 583,89 583,98.1 584,98.1 584,105.6 585,105.6 585,111.2 586,111.2 586,111.3 587,111.3 587,105.7 588,105.7 588,98.3 589,98.3 589,89.4 590,89.4 590,84.5 591,84.5 591,89.4 592,89.4 592,98.3 593,98.3 593,105.7 594,105.7 594,111.3 595,111.3 595,113.7 596,113.7 596,113.1 597,113.1 597,111.2 598,111.2 598,108.6 599,108.6 599,105.4 600,105.4 600,101.7 601,101.7 601,97.6 602,97.6 602,93.1 603,93.1 603,88.3 604,88.3 604,85.7 605,85.7 605,88.8 606,88.8 606,94.5 607,94.5 607,99.7 608,99.7 608,104.3 609,104.3 609,108.3 610,108.3 610,111.5 611,111.5 611,113.2 612,113.2 612,111.7 613,111.7 613,109.5 614,109.5 614,106.9 615,106.9 615,103.9 616,103.9 616,100.5 617,100.5 617,96.8 618,96.8 618,92.8 619,92.8 619,90.7 620,90.7 620,93.2 621,93.2 621,97.9 622,97.9 622,102.2 623,102.2 623,106 624,106 624,109.3 625,109.3 625,111.9 626,111.9 626,113.5 627,113.5 627,113.7 628,113.7 628,113.7 629,113.7 629,113.7 630,113.7 630,113.7 631,113.7 631,113 632,113 632,105.3 633,105.3 633,93 634,93 634,77.6 635,77.6 635,59.6 636,59.6 636,49.7 637,49.7 637,59.6 638,59.6 638,77.6 639,77.6 639,93 640,93 640,105.3 641,105.3 641,113 642,113 642,113.7 643,113.7 643,113.7 644,113.7 644,113.7 645,113.7 645,113.7 646,113.7 646,113.7 647,113.7 647,111.2 648,111.2 648,105.6 649,105.6 649,98.1 650,98.1 650,89 651,89 651,84.1 652,84.1 652,89 653,89 653,98.1 654,98.1 654,105.6 655,105.6 655,111.2 656,111.2 656,111 657,111 657,104.6 658,104.6 658,96.2 659,96.2 659,86.1 660,86.1 660,80.5 661,80.5 661,86.1 662,86.1 662,96.2 663,96.2 663,104.6 664,104.6 664,111 665,111 665,113.7 666,113.7 666,113.7 667,113.7 667,113.7 668,113.7 668,111.1 669,111.1 669,105.1 670,105.1 670,97.1 671,97.1 671,87.5 672,87.5 672,82.2 673,82.2 673,87.5 674,87.5 674,97.1 675,97.1 675,105.1 676,105.1 676,111.1 677,111.1 677,111.1 678,111.1 678,105 679,105 679,96.8 680,96.8 680,87.1 681,87.1 681,81.7 682,81.7 682,87.1 683,87.1 683,96.8 684,96.8 684,105 685,105 685,110.7 686,110.7 686,108.1 687,108.1 687,105.1 688,105.1 688,101.6 689,101.6 689,97.7 690,97.7 690,93.5 691,93.5 691,89 692,89 692,84.2 693,84.2 693,81.7 694,81.7 694,87.4 695,87.4 695,97.7 696,97.7 696,106.1 697,106.1 697,110.3 698,110.3 698,108.5 699,108.5 699,106.5 700,106.5 700,104.2 701,104.2 701,101.8 702,101.8 702,99.1 703,99.1 703,96.3 704,96.3 704,93.3 705,93.3 705,90.2 706,90.2 706,86.9 707,86.9 707,83.5 708,83.5 708,81.7 709,81.7 709,87.4 710,87.4 710,97.7 711,97.7 711,106.1 712,106.1 712,112.1 713,112.1 713,111.7 714,111.7 714,110.3 715,110.3 715,108.6 716,108.6 716,106.8 717,106.8 717,104.8 718,104.8 718,102.6 719,102.6 719,100.2 720,100.2 720,97.7 721,97.7 721,95.1 722,95.1 722,92.3 723,92.3 723,89.4 724,89.4 724,86.4 725,86.4 725,83.3 726,83.3 726,81.7 727,81.7 727,87.4 728,87.4 728,97.7 729,97.7 729,106.1 730,106.1 730,112.1 731,112.1 731,113.7 732,113.7 732,113.7 733,113.7 733,113.1 734,113.1 734,110.9 735,110.9 735,107.9 736,107.9 736,104.2 737,104.2 737,100 738,100 738,95.3 739,95.3 739,90.2 740,90.2 740,84.6 741,84.6 741,81.7 742,81.7 742,87.4 743,87.4 743,97.7 744,97.7 744,106.1 745,106.1 745,107.9 746,107.9 746,95.5 747,95.5 747,79.1 748,79.1 748,69.7 749,69.7 749,77.6 750,77.6 750,91.7 751,91.7 751,103.3 752,103.3 752,99.2 753,99.2 753,90.8 754,90.8 754,86.1 755,86.1 755,90.8 756,90.8 756,99.2 757,99.2 757,106.2 758,106.2 758,111.4 759,111.4 759,111.3 760,111.3 760,105.9 761,105.9 761,98.7 762,98.7 762,90.1 763,90.1 763,85.3 764,85.3 764,90.1 765,90.1 765,98.7 766,98.7 766,105.9 767,105.9 767,99.2 768,99.2 768,90.8 769,90.8 769,86.1 770,86.1 770,90.8 771,90.8 771,99.2 772,99.2 772,106 773,106 773,98.9 774,98.9 774,90.4 775,90.4 775,85.7 776,85.7 776,90.4 777,90.4 777,98.9 778,98.9 778,106 779,106 779,111.4 780,111.4 780,111.3 781,111.3 781,105.8 782,105.8 782,98.5 783,98.5 783,89.7 784,89.7 784,84.8 785,84.8 785,89.7 786,89.7 786,98.5 787,98.5 787,105.8 788,105.8 788,111.3 789,111.3 789,111.7 790,111.7 790,107 791,107 791,100.8 792,100.8 792,93.3 793,93.3 793,89.2 794,89.2 794,93.3 795,93.3 795,100.8 796,100.8 796,107 797,107 797,111.7 798,111.7 798,111.4 799,111.4 799,106.2 800,106.2 800,99.2 801,99.2 801,90.8 802,90.8 802,86.1 803,86.1 803,90.8 804,90.8 804,99.2 805,99.2 805,105.6 806,105.6 806,102.3 807,102.3 807,98.7 808,98.7 808,94.8 809,94.8 809,90.6 810,90.6 810,86 811,86 811,83.7 812,83.7 812,89.1 813,89.1 813,98.7 814,98.7 814,106.6 815,106.6 815,112.2 816,112.2 816,113.7 817,113.7 817,113.7 818,113.7 818,112.1 819,112.1 819,108.9 820,108.9 820,104.6 821,104.6 821,99.6 822,99.6 822,93.8 823,93.8 823,90.7 824,90.7 824,94.8 825,94.8 825,102.2 826,102.2 826,108.3 827,108.3 827,112.5 828,112.5 828,113.7 829,113.7 829,112.8 830,112.8 830,111.1 831,111.1 831,108.8 832,108.8 832,106.1 833,106.1 833,103.1 834,103.1 834,99.7 835,99.7 835,96 836,96 836,92.1 837,92.1 837,87.9 838,87.9 838,85.7 839,85.7 839,90.7 840,90.7 840,99.7 841,99.7 841,107.1 842,107.1 842,112.3 843,112.3 843,112.1 844,112.1 844,108.7 845,108.7 845,104.3 846,104.3 846,99 847,99 847,93 848,93 848,89.7 849,89.7 849,94 850,94 850,101.7 851,101.7 851,108 852,108 852,111.3 853,111.3 853,108.8 854,108.8 854,105.7 855,105.7 855,102.1 856,102.1 856,98.2 857,98.2 857,93.8 858,93.8 858,89.2 859,89.2 859,86.7 860,86.7 860,91.5 861,91.5 861,100.2 862,100.2 862,107.3 863,107.3 863,112.3 864,112.3 864,113.7 865,113.7 865,110.3 866,110.3 866,97.5 867,97.5 867,79.5 868,79.5 868,57.6 869,57.6 869,45.3 870,45.3 870,57.6 871,57.6 871,79.5 872,79.5 872,97.5 873,97.5 873,110.3 874,110.3 874,113.7 875,113.7 875,113.7 876,113.7 876,111.7 877,111.7 877,107.4 878,107.4 878,101.9 879,101.9 879,95.3 880,95.3 880,87.8 881,87.8 881,83.7 882,83.7 882,89.1 883,89.1 883,98.7 884,98.7 884,106.6 885,106.6 885,112.1 886,112.1 886,110.4 887,110.4 887,108.4 888,108.4 888,106.1 889,106.1 889,103.6 890,103.6 890,100.7 891,100.7 891,97.7 892,97.7 892,94.5 893,94.5 893,91 894,91 894,87.4 895,87.4 895,83.7 896,83.7 896,81.7 897,81.7 897,87.4 898,87.4 898,97.7 899,97.7 899,106.1 900,106.1 900,112.1 901,112.1 901,113.7 902,113.7 902,113.7 903,113.7 903,116.7" fill="url(#go)"/>
<g fill="#6f6a10" opacity=".7"><rect x="34" y="56.7" width="1" height="60"/><rect x="35" y="56.7" width="1" height="60"/><rect x="36" y="56.7" width="1" height="60"/><rect x="148" y="56.7" width="1" height="60"/><rect x="149" y="56.7" width="1" height="60"/><rect x="150" y="56.7" width="1" height="60"/><rect x="305" y="56.7" width="1" height="60"/><rect x="306" y="56.7" width="1" height="60"/><rect x="307" y="56.7" width="1" height="60"/><rect x="386" y="61.4" width="1" height="55.3"/><rect x="387" y="61.4" width="1" height="55.3"/><rect x="388" y="61.4" width="1" height="55.3"/><rect x="517" y="56.7" width="1" height="60"/><rect x="518" y="56.7" width="1" height="60"/><rect x="519" y="56.7" width="1" height="60"/><rect x="635" y="56.8" width="1" height="59.9"/><rect x="636" y="56.8" width="1" height="59.9"/><rect x="637" y="56.8" width="1" height="59.9"/><rect x="747" y="69.9" width="1" height="46.8"/><rect x="748" y="69.9" width="1" height="46.8"/><rect x="749" y="69.9" width="1" height="46.8"/><rect x="868" y="56.7" width="1" height="60"/><rect x="869" y="56.7" width="1" height="60"/><rect x="870" y="56.7" width="1" height="60"/></g>
<rect x="0" y="115.500" width="903" height="1.500" fill="#3a6aa8" opacity=".6"/>
<rect x="0" y="5" width="903" height="1" fill="#d0d0d0" opacity=".3"/>
<rect x="0" y="62" width="903" height="1" fill="#d0d0d0" opacity=".3"/>
<rect x="0" y="90" width="903" height="1" fill="#d0d0d0" opacity=".3"/>
</svg>
<div class="pill" style="top:451px">66ms (15FPS)</div>
<div class="pill" style="top:507px">33ms (30FPS)</div>
<div class="pill" style="top:536px">16ms (60FPS)</div>
<div class="sb" style="left:1073px;top:452px;height:117px">
 <div class="track" style="top:17px;height:83px"></div>
 <div class="thumb" style="top:17px;height:29px"></div>
 <div class="a" style="left:3px;top:6px;width:0;height:0;border-left:3.500px solid transparent;border-right:3.500px solid transparent;border-bottom:5px solid #2c2c2c"></div>
 <div class="a" style="left:3px;top:106px;width:0;height:0;border-left:3.500px solid transparent;border-right:3.500px solid transparent;border-top:5px solid #2c2c2c"></div>
</div>
<!-- second toolbar -->
<div class="tbar" style="left:0;top:570px;width:1087px;border-top:1px solid #5e5e5e;height:18px">
 <div class="sep" style="left:5px"></div>
 <div class="tb" style="left:6px">Hierarchy</div><div class="dd" style="left:116px;top:5px;border-left-width:2.500px;border-right-width:2.500px;border-top-width:3px"></div>
 <div class="sep" style="left:125px"></div>
 <div class="tb" style="left:328px;top:1px;letter-spacing:.95px">CPU:19.99ms</div>
 <div class="tb" style="left:410px;top:1px;letter-spacing:.95px">GPU:0.00ms</div>
 <div class="sep" style="left:486px"></div>
 <div class="tb" style="left:486px">Frame Debugger</div>
 <div class="sep" style="left:578px"></div>
 <div class="search" style="left:781px;top:1px;width:300px"></div>
 <svg class="a" style="left:785px;top:3px" width="10" height="10" viewBox="0 0 10 10"><circle cx="3.800" cy="4" r="2.800" fill="none" stroke="#4a4a4a" stroke-width="1"/><path d="M6 6.200l2.500 2.800" stroke="#4a4a4a" stroke-width="1.200"/></svg>
</div>
<!-- table header -->
<div class="a" style="left:0;top:588px;width:747px;height:17px;background:linear-gradient(#b4b4b4,#9c9c9c);border-bottom:1px solid #5a5a5a"></div>
<div class="th" style="left:0;top:588px;width:332px;text-align:left;padding-left:3px">Overview</div>
<div class="th" style="left:333px;top:588px;width:64px">Total</div>
<div class="th" style="left:398px;top:588px;width:64px">Self</div>
<div class="th" style="left:463px;top:588px;width:64px">Calls</div>
<div class="th" style="left:528px;top:588px;width:64px">GC Alloc</div>
<div class="th" style="left:591px;top:588px;width:66px;background:linear-gradient(#a4b0cc,#8c98b8);border:1px solid #4a5674">Time ms</div>
<div class="th" style="left:658px;top:588px;width:64px">Self ms</div>
<div class="th" style="left:723px;top:588px;width:24px"></div>
<svg class="a" style="left:725px;top:589px" width="16" height="14" viewBox="0 0 16 14"><path d="M8 1.500L14.500 13H1.500z" fill="#b4b4b4" stroke="#6a6a6a" stroke-width="1"/><path d="M8 5v4.500M8 10.500v1.500" stroke="#dcdcdc" stroke-width="1.400"/></svg>
<div class="row" style="top:605px;background:#a2a2a2"><div class="tri-r" style="left:8px;top:4px;border-top-width:4px;border-bottom-width:4px;border-left-width:7px;border-left-color:#666"></div><div class="cell" style="left:22px;width:310px;overflow:hidden">MainController.ChunkChecker() [Coroutine: MoveNext</div><div class="cell r" style="left:333px;width:59px">74.2%</div><div class="cell r" style="left:398px;width:59px">72.8%</div><div class="cell r" style="left:463px;width:59px">9</div><div class="cell r" style="left:528px;width:59px">128.1 KB</div><div class="cell r" style="left:593px;width:59px">14.85</div><div class="cell r" style="left:658px;width:59px">14.57</div></div>
<div class="row" style="top:621px;background:#aaaaaa"><div class="tri-r" style="left:8px;top:4px;border-top-width:4px;border-bottom-width:4px;border-left-width:7px;border-left-color:#666"></div><div class="cell" style="left:22px;width:310px;overflow:hidden">ChunkController.Start()</div><div class="cell r" style="left:333px;width:59px">9.5%</div><div class="cell r" style="left:398px;width:59px">1.2%</div><div class="cell r" style="left:463px;width:59px">1</div><div class="cell r" style="left:528px;width:59px">2.0 KB</div><div class="cell r" style="left:593px;width:59px">1.90</div><div class="cell r" style="left:658px;width:59px">0.24</div></div>
<div class="row" style="top:637px;background:#a2a2a2"><div class="tri-r" style="left:8px;top:4px;border-top-width:4px;border-bottom-width:4px;border-left-width:7px;border-left-color:#666"></div><div class="cell" style="left:22px;width:310px;overflow:hidden">Physics.Processing</div><div class="cell r" style="left:333px;width:59px">6.8%</div><div class="cell r" style="left:398px;width:59px">3.0%</div><div class="cell r" style="left:463px;width:59px">5</div><div class="cell r" style="left:528px;width:59px">0 B</div><div class="cell r" style="left:593px;width:59px">1.36</div><div class="cell r" style="left:658px;width:59px">0.60</div></div>
<div class="row" style="top:653px;background:#aaaaaa"><div class="tri-r" style="left:8px;top:4px;border-top-width:4px;border-bottom-width:4px;border-left-width:7px;border-left-color:#666"></div><div class="cell" style="left:22px;width:310px;overflow:hidden">Camera.Render</div><div class="cell r" style="left:333px;width:59px">3.0%</div><div class="cell r" style="left:398px;width:59px">0.6%</div><div class="cell r" style="left:463px;width:59px">1</div><div class="cell r" style="left:528px;width:59px">0 B</div><div class="cell r" style="left:593px;width:59px">0.61</div><div class="cell r" style="left:658px;width:59px">0.12</div></div>
<div class="row" style="top:669px;background:#a2a2a2"><div class="cell" style="left:20px">Overhead</div><div class="cell r" style="left:333px;width:59px">1.8%</div><div class="cell r" style="left:398px;width:59px">1.8%</div><div class="cell r" style="left:463px;width:59px">1</div><div class="cell r" style="left:528px;width:59px">0 B</div><div class="cell r" style="left:593px;width:59px">0.36</div><div class="cell r" style="left:658px;width:59px">0.36</div></div>
<div class="sb" style="left:747px;top:605px;height:80px">
 <div class="track" style="top:17px;height:46px"></div>
 <div class="thumb" style="top:17px;height:19px"></div>
 <div class="a" style="left:3px;top:6px;width:0;height:0;border-left:3.500px solid transparent;border-right:3.500px solid transparent;border-bottom:5px solid #2c2c2c"></div>
 <div class="a" style="left:3px;top:69px;width:0;height:0;border-left:3.500px solid transparent;border-right:3.500px solid transparent;border-top:5px solid #2c2c2c"></div>
</div>
<div class="a" style="left:762px;top:588px;width:325px;height:17px;background:linear-gradient(#b4b4b4,#9c9c9c);border-bottom:1px solid #5a5a5a;border-left:1px solid #5a5a5a"></div>
<div class="a" style="left:762px;top:605px;width:1px;height:80px;background:#5a5a5a"></div>
<div class="t" style="left:816px;top:637px;font-size:11px;letter-spacing:.27px">Select Line for per-object breakdown</div>
<!-- TASKBAR -->
<div id="taskbar" class="a">
 <svg class="a" style="left:10px;top:22px" width="16" height="16" viewBox="0 0 16 16"><path d="M0 2.300l6.500-.9v6.100H0zM7.300 1.300L16 0v7.500H7.300zM0 8.300h6.500v6.100L0 13.500zM7.300 8.300H16V16l-8.700-1.200z" fill="#fff"/></svg>
 <svg class="a" style="left:44px;top:24px" width="21" height="13" viewBox="0 0 21 13"><rect x="4.500" y=".5" width="12" height="12" fill="none" stroke="#fff"/><path d="M2.500 2H.5v9h2M18.500 2h2v9h-2" fill="none" stroke="#fff"/></svg>
 <div class="a" style="left:85px;top:7px;width:16px;height:16px;background:#fafafa"></div>
 <svg class="a" style="left:85px;top:7px" width="16" height="16" viewBox="0 0 16 16"><path d="M13.200 7H8.200v2.200h3A3.600 3.600 0 0 1 8 11.800" fill="none" stroke="#4285f4" stroke-width="2.100"/><path d="M11.200 5.200A4.500 4.500 0 0 0 4 5.800" fill="none" stroke="#ea4335" stroke-width="2.100"/><path d="M4.200 5.400A4.500 4.500 0 0 0 4.200 10.600" fill="none" stroke="#fbbc05" stroke-width="2.100"/><path d="M4 10.200A4.500 4.500 0 0 0 11.600 10.600" fill="none" stroke="#34a853" stroke-width="2.100"/></svg>
 <div class="a" style="left:123px;top:7px;width:14px;height:14px;background:#d8d8d8;border-bottom:3px solid #8a8a8a;border-left:2px solid #777"></div>
 <div class="tk" style="left:126px;top:9px;font-size:7px;font-weight:bold;color:#222;line-height:8px">Aa</div>
 <svg class="a" style="left:160px;top:6px" width="13" height="16" viewBox="0 0 13 16"><rect x=".5" y=".5" width="12" height="15" fill="#f4f4f4" stroke="#ccc"/><rect x="2" y="2" width="9" height="3" fill="#333"/><path d="M2 7h2v2H2zM5.500 7h2v2h-2zM9 7h2v2H9zM2 10h2v2H2zM5.500 10h2v2h-2zM9 10h2v2H9zM2 13h2v1.500H2zM5.500 13h2v1.500h-2zM9 13h2v1.500H9z" fill="#333"/></svg>
 <div class="a" style="left:186px;top:0;width:160px;height:30px;background:#4a4341;border-bottom:2px solid #76b9ed"></div>
 <svg class="a" style="left:192px;top:3.400px" width="21.400" height="23.500" viewBox="0 0 20 22"><path d="M3 10.500L15 3.700M3 10.500L15.300 17.300M3 10.500H11.400M11.400 10.500L15 3.700M11.400 10.500L15.300 17.300M15 3.700Q17 7 16.400 9.500M16.400 11.500Q17 14 15.300 17.300" stroke="#fff" stroke-width="1.800" fill="none" stroke-linejoin="round" stroke-linecap="round"/></svg>
 <div class="tk" style="left:214px;top:7px;line-height:16px;font-size:12px;letter-spacing:-.25px">Unity 5.5.0f3 Personal...</div>
 <!-- tray -->
 <svg class="a" style="left:1089px;top:26px" width="14" height="9" viewBox="0 0 14 9"><path d="M1 8l6-6.500L13 8" fill="none" stroke="#fff" stroke-width="1.300"/></svg>
 <svg class="a" style="left:1119px;top:10px" width="18" height="13" viewBox="0 0 18 13"><rect x=".8" y="1.800" width="13" height="7" fill="none" stroke="#fff" stroke-width="1.200"/><rect x="2.500" y="3.500" width="3.500" height="3.600" fill="#fff"/><circle cx="12.500" cy="8" r="4" fill="#1aa02c"/><path d="M12.500 5.300c-1.600 1.700-1.600 3.400 0 4.400 1.600-1 1.600-2.700 0-4.400z" fill="#fff"/></svg>
 <svg class="a" style="left:1153px;top:9px" width="15" height="14" viewBox="0 0 15 14"><circle cx="12" cy="11.500" r="1.600" fill="#fff"/><path d="M7.500 12.500A5 5 0 0 1 12.500 7.500M4.500 12.500A8 8 0 0 1 12.500 4.500M1.500 12.500A11 11 0 0 1 12.500 1.500" fill="none" stroke="#fff" stroke-width="1.200" opacity=".85"/></svg>
 <svg class="a" style="left:1119px;top:38px" width="17" height="13" viewBox="0 0 17 13"><path d="M.8 4.500h2.500L7 1.200v10.600L3.300 8.500H.8z" fill="none" stroke="#fff" stroke-width="1.100"/><path d="M10.500 4.500l4 4M14.500 4.500l-4 4" stroke="#fff" stroke-width="1.100"/></svg>
 <div class="a" style="left:1153px;top:38px;width:15px;height:14px;background:#2a5da8"></div>
 <svg class="a" style="left:1152px;top:40px" width="17" height="10" viewBox="0 0 17 10"><path d="M.5 5Q8.500-3 16.500 5 8.500 13 .5 5z" fill="#fff"/><circle cx="8.500" cy="5" r="3.200" fill="#2a5da8"/><circle cx="8.500" cy="5" r="1.400" fill="#0c1830"/></svg>
 <svg class="a" style="left:1183px;top:21px" width="18" height="18" viewBox="0 0 18 18"><path d="M4.500 15.500c-3 1-4.500-1.500-2-3.500l9-9c2-2 4.500.5 2.500 2.500l-8 8c-1.500 1.500-3 .5-1.500-1l6-6" fill="none" stroke="#fff" stroke-width="1.300"/><path d="M12.500 8.500c2-1 4 .5 2.500 2.500" fill="none" stroke="#fff" stroke-width="1.200"/></svg>
 <svg class="a" style="left:1212px;top:24px" width="24" height="13" viewBox="0 0 24 13"><rect x=".6" y=".6" width="22.800" height="11.800" rx="1" fill="none" stroke="#fff" stroke-width="1.200"/><path d="M3 3.500h18M3 6h18" stroke="#fff" stroke-width="1.200" stroke-dasharray="1.300 1.100"/><path d="M5 9.500h14" stroke="#fff" stroke-width="1.300"/></svg>
 <div class="tk" style="left:1254px;top:5px;width:44px;text-align:center;line-height:14px;font-size:11.400px">2:49 PM</div>
 <div class="tk" style="left:1252px;top:24px;width:48px;text-align:center;line-height:14px;font-size:11.400px">Tuesday</div>
 <div class="tk" style="left:1248px;top:43px;width:56px;text-align:center;line-height:14px;font-size:11.400px">4/25/2017</div>
 <svg class="a" style="left:1325px;top:21px" width="17" height="17" viewBox="0 0 17 17"><path d="M.7 .7h15.600v11.600h-5.500L8.500 14.800 6.200 12.300H.7z" fill="none" stroke="#fff" stroke-width="1.200"/></svg>
 <div class="a" style="left:1361px;top:0;width:1px;height:61px;background:#4a4442"></div>
</div>
</div></body></html>
